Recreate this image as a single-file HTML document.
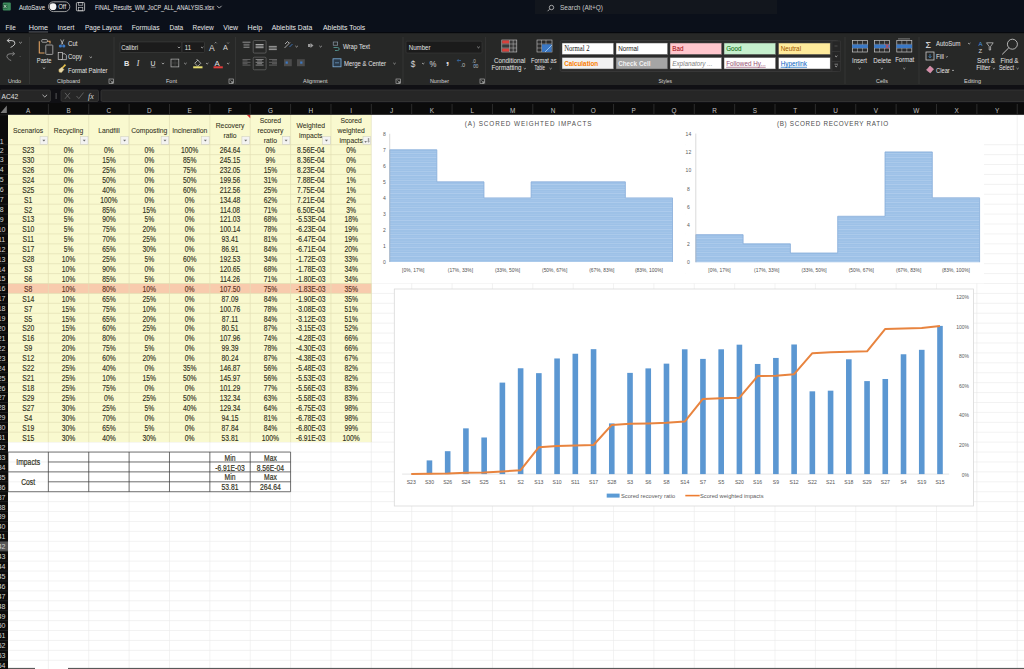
<!DOCTYPE html>
<html><head><meta charset="utf-8"><title>Excel</title>
<style>html,body{margin:0;padding:0;background:#fff;}body{width:1024px;height:669px;overflow:hidden;font-family:"Liberation Sans",sans-serif;}</style>
</head><body>
<svg width="1024" height="669" viewBox="0 0 1024 669" font-family='"Liberation Sans", sans-serif' style="display:block">
<rect x="0.00" y="0.00" width="1024.00" height="669.00" fill="#ffffff" />
<line x1="8.00" y1="114.80" x2="1024.00" y2="114.80" stroke="#eaeaea" stroke-width="0.6" />
<line x1="8.00" y1="144.70" x2="1024.00" y2="144.70" stroke="#eaeaea" stroke-width="0.6" />
<line x1="8.00" y1="154.61" x2="1024.00" y2="154.61" stroke="#eaeaea" stroke-width="0.6" />
<line x1="8.00" y1="164.53" x2="1024.00" y2="164.53" stroke="#eaeaea" stroke-width="0.6" />
<line x1="8.00" y1="174.44" x2="1024.00" y2="174.44" stroke="#eaeaea" stroke-width="0.6" />
<line x1="8.00" y1="184.36" x2="1024.00" y2="184.36" stroke="#eaeaea" stroke-width="0.6" />
<line x1="8.00" y1="194.27" x2="1024.00" y2="194.27" stroke="#eaeaea" stroke-width="0.6" />
<line x1="8.00" y1="204.19" x2="1024.00" y2="204.19" stroke="#eaeaea" stroke-width="0.6" />
<line x1="8.00" y1="214.10" x2="1024.00" y2="214.10" stroke="#eaeaea" stroke-width="0.6" />
<line x1="8.00" y1="224.02" x2="1024.00" y2="224.02" stroke="#eaeaea" stroke-width="0.6" />
<line x1="8.00" y1="233.93" x2="1024.00" y2="233.93" stroke="#eaeaea" stroke-width="0.6" />
<line x1="8.00" y1="243.85" x2="1024.00" y2="243.85" stroke="#eaeaea" stroke-width="0.6" />
<line x1="8.00" y1="253.76" x2="1024.00" y2="253.76" stroke="#eaeaea" stroke-width="0.6" />
<line x1="8.00" y1="263.68" x2="1024.00" y2="263.68" stroke="#eaeaea" stroke-width="0.6" />
<line x1="8.00" y1="273.59" x2="1024.00" y2="273.59" stroke="#eaeaea" stroke-width="0.6" />
<line x1="8.00" y1="283.51" x2="1024.00" y2="283.51" stroke="#eaeaea" stroke-width="0.6" />
<line x1="8.00" y1="293.42" x2="1024.00" y2="293.42" stroke="#eaeaea" stroke-width="0.6" />
<line x1="8.00" y1="303.34" x2="1024.00" y2="303.34" stroke="#eaeaea" stroke-width="0.6" />
<line x1="8.00" y1="313.25" x2="1024.00" y2="313.25" stroke="#eaeaea" stroke-width="0.6" />
<line x1="8.00" y1="323.17" x2="1024.00" y2="323.17" stroke="#eaeaea" stroke-width="0.6" />
<line x1="8.00" y1="333.08" x2="1024.00" y2="333.08" stroke="#eaeaea" stroke-width="0.6" />
<line x1="8.00" y1="343.00" x2="1024.00" y2="343.00" stroke="#eaeaea" stroke-width="0.6" />
<line x1="8.00" y1="352.91" x2="1024.00" y2="352.91" stroke="#eaeaea" stroke-width="0.6" />
<line x1="8.00" y1="362.83" x2="1024.00" y2="362.83" stroke="#eaeaea" stroke-width="0.6" />
<line x1="8.00" y1="372.75" x2="1024.00" y2="372.75" stroke="#eaeaea" stroke-width="0.6" />
<line x1="8.00" y1="382.66" x2="1024.00" y2="382.66" stroke="#eaeaea" stroke-width="0.6" />
<line x1="8.00" y1="392.57" x2="1024.00" y2="392.57" stroke="#eaeaea" stroke-width="0.6" />
<line x1="8.00" y1="402.49" x2="1024.00" y2="402.49" stroke="#eaeaea" stroke-width="0.6" />
<line x1="8.00" y1="412.40" x2="1024.00" y2="412.40" stroke="#eaeaea" stroke-width="0.6" />
<line x1="8.00" y1="422.32" x2="1024.00" y2="422.32" stroke="#eaeaea" stroke-width="0.6" />
<line x1="8.00" y1="432.23" x2="1024.00" y2="432.23" stroke="#eaeaea" stroke-width="0.6" />
<line x1="8.00" y1="442.15" x2="1024.00" y2="442.15" stroke="#eaeaea" stroke-width="0.6" />
<line x1="8.00" y1="452.06" x2="1024.00" y2="452.06" stroke="#eaeaea" stroke-width="0.6" />
<line x1="8.00" y1="461.98" x2="1024.00" y2="461.98" stroke="#eaeaea" stroke-width="0.6" />
<line x1="8.00" y1="471.89" x2="1024.00" y2="471.89" stroke="#eaeaea" stroke-width="0.6" />
<line x1="8.00" y1="481.81" x2="1024.00" y2="481.81" stroke="#eaeaea" stroke-width="0.6" />
<line x1="8.00" y1="491.72" x2="1024.00" y2="491.72" stroke="#eaeaea" stroke-width="0.6" />
<line x1="8.00" y1="501.64" x2="1024.00" y2="501.64" stroke="#eaeaea" stroke-width="0.6" />
<line x1="8.00" y1="511.55" x2="1024.00" y2="511.55" stroke="#eaeaea" stroke-width="0.6" />
<line x1="8.00" y1="521.47" x2="1024.00" y2="521.47" stroke="#eaeaea" stroke-width="0.6" />
<line x1="8.00" y1="531.38" x2="1024.00" y2="531.38" stroke="#eaeaea" stroke-width="0.6" />
<line x1="8.00" y1="541.30" x2="1024.00" y2="541.30" stroke="#eaeaea" stroke-width="0.6" />
<line x1="8.00" y1="551.21" x2="1024.00" y2="551.21" stroke="#eaeaea" stroke-width="0.6" />
<line x1="8.00" y1="561.13" x2="1024.00" y2="561.13" stroke="#eaeaea" stroke-width="0.6" />
<line x1="8.00" y1="571.04" x2="1024.00" y2="571.04" stroke="#eaeaea" stroke-width="0.6" />
<line x1="8.00" y1="580.96" x2="1024.00" y2="580.96" stroke="#eaeaea" stroke-width="0.6" />
<line x1="8.00" y1="590.88" x2="1024.00" y2="590.88" stroke="#eaeaea" stroke-width="0.6" />
<line x1="8.00" y1="600.79" x2="1024.00" y2="600.79" stroke="#eaeaea" stroke-width="0.6" />
<line x1="8.00" y1="610.70" x2="1024.00" y2="610.70" stroke="#eaeaea" stroke-width="0.6" />
<line x1="8.00" y1="620.62" x2="1024.00" y2="620.62" stroke="#eaeaea" stroke-width="0.6" />
<line x1="8.00" y1="630.53" x2="1024.00" y2="630.53" stroke="#eaeaea" stroke-width="0.6" />
<line x1="8.00" y1="640.45" x2="1024.00" y2="640.45" stroke="#eaeaea" stroke-width="0.6" />
<line x1="8.00" y1="650.37" x2="1024.00" y2="650.37" stroke="#eaeaea" stroke-width="0.6" />
<line x1="8.00" y1="660.28" x2="1024.00" y2="660.28" stroke="#eaeaea" stroke-width="0.6" />
<line x1="8.00" y1="670.19" x2="1024.00" y2="670.19" stroke="#eaeaea" stroke-width="0.6" />
<line x1="8.00" y1="680.11" x2="1024.00" y2="680.11" stroke="#eaeaea" stroke-width="0.6" />
<line x1="8.00" y1="690.02" x2="1024.00" y2="690.02" stroke="#eaeaea" stroke-width="0.6" />
<line x1="8.00" y1="699.94" x2="1024.00" y2="699.94" stroke="#eaeaea" stroke-width="0.6" />
<line x1="8.00" y1="709.86" x2="1024.00" y2="709.86" stroke="#eaeaea" stroke-width="0.6" />
<line x1="8.00" y1="114.80" x2="8.00" y2="669.00" stroke="#eaeaea" stroke-width="0.6" />
<line x1="48.37" y1="114.80" x2="48.37" y2="669.00" stroke="#eaeaea" stroke-width="0.6" />
<line x1="88.74" y1="114.80" x2="88.74" y2="669.00" stroke="#eaeaea" stroke-width="0.6" />
<line x1="129.11" y1="114.80" x2="129.11" y2="669.00" stroke="#eaeaea" stroke-width="0.6" />
<line x1="169.48" y1="114.80" x2="169.48" y2="669.00" stroke="#eaeaea" stroke-width="0.6" />
<line x1="209.85" y1="114.80" x2="209.85" y2="669.00" stroke="#eaeaea" stroke-width="0.6" />
<line x1="250.22" y1="114.80" x2="250.22" y2="669.00" stroke="#eaeaea" stroke-width="0.6" />
<line x1="290.59" y1="114.80" x2="290.59" y2="669.00" stroke="#eaeaea" stroke-width="0.6" />
<line x1="330.96" y1="114.80" x2="330.96" y2="669.00" stroke="#eaeaea" stroke-width="0.6" />
<line x1="371.33" y1="114.80" x2="371.33" y2="669.00" stroke="#eaeaea" stroke-width="0.6" />
<line x1="411.70" y1="114.80" x2="411.70" y2="669.00" stroke="#eaeaea" stroke-width="0.6" />
<line x1="452.07" y1="114.80" x2="452.07" y2="669.00" stroke="#eaeaea" stroke-width="0.6" />
<line x1="492.44" y1="114.80" x2="492.44" y2="669.00" stroke="#eaeaea" stroke-width="0.6" />
<line x1="532.81" y1="114.80" x2="532.81" y2="669.00" stroke="#eaeaea" stroke-width="0.6" />
<line x1="573.18" y1="114.80" x2="573.18" y2="669.00" stroke="#eaeaea" stroke-width="0.6" />
<line x1="613.55" y1="114.80" x2="613.55" y2="669.00" stroke="#eaeaea" stroke-width="0.6" />
<line x1="653.92" y1="114.80" x2="653.92" y2="669.00" stroke="#eaeaea" stroke-width="0.6" />
<line x1="694.29" y1="114.80" x2="694.29" y2="669.00" stroke="#eaeaea" stroke-width="0.6" />
<line x1="734.66" y1="114.80" x2="734.66" y2="669.00" stroke="#eaeaea" stroke-width="0.6" />
<line x1="775.03" y1="114.80" x2="775.03" y2="669.00" stroke="#eaeaea" stroke-width="0.6" />
<line x1="815.40" y1="114.80" x2="815.40" y2="669.00" stroke="#eaeaea" stroke-width="0.6" />
<line x1="855.77" y1="114.80" x2="855.77" y2="669.00" stroke="#eaeaea" stroke-width="0.6" />
<line x1="896.14" y1="114.80" x2="896.14" y2="669.00" stroke="#eaeaea" stroke-width="0.6" />
<line x1="936.51" y1="114.80" x2="936.51" y2="669.00" stroke="#eaeaea" stroke-width="0.6" />
<line x1="976.88" y1="114.80" x2="976.88" y2="669.00" stroke="#eaeaea" stroke-width="0.6" />
<line x1="1017.25" y1="114.80" x2="1017.25" y2="669.00" stroke="#eaeaea" stroke-width="0.6" />
<rect x="8.00" y="114.80" width="363.33" height="327.35" fill="#f9f9cf" />
<rect x="8.00" y="283.51" width="363.33" height="9.91" fill="#f8cbad" />
<line x1="8.00" y1="144.70" x2="371.33" y2="144.70" stroke="#e3e0b4" stroke-width="0.7" />
<line x1="8.00" y1="154.61" x2="371.33" y2="154.61" stroke="#e3e0b4" stroke-width="0.7" />
<line x1="8.00" y1="164.53" x2="371.33" y2="164.53" stroke="#e3e0b4" stroke-width="0.7" />
<line x1="8.00" y1="174.44" x2="371.33" y2="174.44" stroke="#e3e0b4" stroke-width="0.7" />
<line x1="8.00" y1="184.36" x2="371.33" y2="184.36" stroke="#e3e0b4" stroke-width="0.7" />
<line x1="8.00" y1="194.27" x2="371.33" y2="194.27" stroke="#e3e0b4" stroke-width="0.7" />
<line x1="8.00" y1="204.19" x2="371.33" y2="204.19" stroke="#e3e0b4" stroke-width="0.7" />
<line x1="8.00" y1="214.10" x2="371.33" y2="214.10" stroke="#e3e0b4" stroke-width="0.7" />
<line x1="8.00" y1="224.02" x2="371.33" y2="224.02" stroke="#e3e0b4" stroke-width="0.7" />
<line x1="8.00" y1="233.93" x2="371.33" y2="233.93" stroke="#e3e0b4" stroke-width="0.7" />
<line x1="8.00" y1="243.85" x2="371.33" y2="243.85" stroke="#e3e0b4" stroke-width="0.7" />
<line x1="8.00" y1="253.76" x2="371.33" y2="253.76" stroke="#e3e0b4" stroke-width="0.7" />
<line x1="8.00" y1="263.68" x2="371.33" y2="263.68" stroke="#e3e0b4" stroke-width="0.7" />
<line x1="8.00" y1="273.59" x2="371.33" y2="273.59" stroke="#e3e0b4" stroke-width="0.7" />
<line x1="8.00" y1="283.51" x2="371.33" y2="283.51" stroke="#e3e0b4" stroke-width="0.7" />
<line x1="8.00" y1="293.42" x2="371.33" y2="293.42" stroke="#e3e0b4" stroke-width="0.7" />
<line x1="8.00" y1="303.34" x2="371.33" y2="303.34" stroke="#e3e0b4" stroke-width="0.7" />
<line x1="8.00" y1="313.25" x2="371.33" y2="313.25" stroke="#e3e0b4" stroke-width="0.7" />
<line x1="8.00" y1="323.17" x2="371.33" y2="323.17" stroke="#e3e0b4" stroke-width="0.7" />
<line x1="8.00" y1="333.08" x2="371.33" y2="333.08" stroke="#e3e0b4" stroke-width="0.7" />
<line x1="8.00" y1="343.00" x2="371.33" y2="343.00" stroke="#e3e0b4" stroke-width="0.7" />
<line x1="8.00" y1="352.91" x2="371.33" y2="352.91" stroke="#e3e0b4" stroke-width="0.7" />
<line x1="8.00" y1="362.83" x2="371.33" y2="362.83" stroke="#e3e0b4" stroke-width="0.7" />
<line x1="8.00" y1="372.75" x2="371.33" y2="372.75" stroke="#e3e0b4" stroke-width="0.7" />
<line x1="8.00" y1="382.66" x2="371.33" y2="382.66" stroke="#e3e0b4" stroke-width="0.7" />
<line x1="8.00" y1="392.57" x2="371.33" y2="392.57" stroke="#e3e0b4" stroke-width="0.7" />
<line x1="8.00" y1="402.49" x2="371.33" y2="402.49" stroke="#e3e0b4" stroke-width="0.7" />
<line x1="8.00" y1="412.40" x2="371.33" y2="412.40" stroke="#e3e0b4" stroke-width="0.7" />
<line x1="8.00" y1="422.32" x2="371.33" y2="422.32" stroke="#e3e0b4" stroke-width="0.7" />
<line x1="8.00" y1="432.23" x2="371.33" y2="432.23" stroke="#e3e0b4" stroke-width="0.7" />
<line x1="48.37" y1="114.80" x2="48.37" y2="442.15" stroke="#e3e0b4" stroke-width="0.7" />
<line x1="88.74" y1="114.80" x2="88.74" y2="442.15" stroke="#e3e0b4" stroke-width="0.7" />
<line x1="129.11" y1="114.80" x2="129.11" y2="442.15" stroke="#e3e0b4" stroke-width="0.7" />
<line x1="169.48" y1="114.80" x2="169.48" y2="442.15" stroke="#e3e0b4" stroke-width="0.7" />
<line x1="209.85" y1="114.80" x2="209.85" y2="442.15" stroke="#e3e0b4" stroke-width="0.7" />
<line x1="250.22" y1="114.80" x2="250.22" y2="442.15" stroke="#e3e0b4" stroke-width="0.7" />
<line x1="290.59" y1="114.80" x2="290.59" y2="442.15" stroke="#e3e0b4" stroke-width="0.7" />
<line x1="330.96" y1="114.80" x2="330.96" y2="442.15" stroke="#e3e0b4" stroke-width="0.7" />
<line x1="371.33" y1="114.80" x2="371.33" y2="442.15" stroke="#e3e0b4" stroke-width="0.7" />
<text transform="translate(28.18,132.60) scale(0.85,1)" font-size="8.0" fill="#33331d" text-anchor="middle" stroke="#33331d" stroke-width="0.08">Scenarios</text>
<rect x="40.07" y="136.70" width="7.60" height="7.60" fill="#f3f3f1" stroke="#c9c9c2" stroke-width="0.5" />
<path d="M42.37 139.70 L45.37 139.70 L43.87 141.50Z" stroke="none" fill="#6a6a6a" stroke-width="1" />
<text transform="translate(68.55,132.60) scale(0.85,1)" font-size="8.0" fill="#33331d" text-anchor="middle" stroke="#33331d" stroke-width="0.08">Recycling</text>
<rect x="80.44" y="136.70" width="7.60" height="7.60" fill="#f3f3f1" stroke="#c9c9c2" stroke-width="0.5" />
<path d="M82.74 139.70 L85.74 139.70 L84.24 141.50Z" stroke="none" fill="#6a6a6a" stroke-width="1" />
<text transform="translate(108.92,132.60) scale(0.85,1)" font-size="8.0" fill="#33331d" text-anchor="middle" stroke="#33331d" stroke-width="0.08">Landfill</text>
<rect x="120.81" y="136.70" width="7.60" height="7.60" fill="#f3f3f1" stroke="#c9c9c2" stroke-width="0.5" />
<path d="M123.11 139.70 L126.11 139.70 L124.61 141.50Z" stroke="none" fill="#6a6a6a" stroke-width="1" />
<text transform="translate(149.29,132.60) scale(0.85,1)" font-size="8.0" fill="#33331d" text-anchor="middle" stroke="#33331d" stroke-width="0.08">Composting</text>
<rect x="161.18" y="136.70" width="7.60" height="7.60" fill="#f3f3f1" stroke="#c9c9c2" stroke-width="0.5" />
<path d="M163.48 139.70 L166.48 139.70 L164.98 141.50Z" stroke="none" fill="#6a6a6a" stroke-width="1" />
<text transform="translate(189.66,132.60) scale(0.85,1)" font-size="8.0" fill="#33331d" text-anchor="middle" stroke="#33331d" stroke-width="0.08">Incineration</text>
<rect x="201.55" y="136.70" width="7.60" height="7.60" fill="#f3f3f1" stroke="#c9c9c2" stroke-width="0.5" />
<path d="M203.85 139.70 L206.85 139.70 L205.35 141.50Z" stroke="none" fill="#6a6a6a" stroke-width="1" />
<text transform="translate(230.03,127.65) scale(0.85,1)" font-size="8.0" fill="#33331d" text-anchor="middle" stroke="#33331d" stroke-width="0.08">Recovery</text>
<text transform="translate(230.03,137.55) scale(0.85,1)" font-size="8.0" fill="#33331d" text-anchor="middle" stroke="#33331d" stroke-width="0.08">ratio</text>
<rect x="241.92" y="136.70" width="7.60" height="7.60" fill="#f3f3f1" stroke="#c9c9c2" stroke-width="0.5" />
<path d="M244.22 139.70 L247.22 139.70 L245.72 141.50Z" stroke="none" fill="#6a6a6a" stroke-width="1" />
<text transform="translate(270.40,122.70) scale(0.85,1)" font-size="8.0" fill="#33331d" text-anchor="middle" stroke="#33331d" stroke-width="0.08">Scored</text>
<text transform="translate(270.40,132.60) scale(0.85,1)" font-size="8.0" fill="#33331d" text-anchor="middle" stroke="#33331d" stroke-width="0.08">recovery</text>
<text transform="translate(270.40,142.50) scale(0.85,1)" font-size="8.0" fill="#33331d" text-anchor="middle" stroke="#33331d" stroke-width="0.08">ratio</text>
<rect x="282.29" y="136.70" width="7.60" height="7.60" fill="#f3f3f1" stroke="#c9c9c2" stroke-width="0.5" />
<path d="M284.59 139.70 L287.59 139.70 L286.09 141.50Z" stroke="none" fill="#6a6a6a" stroke-width="1" />
<text transform="translate(310.77,127.65) scale(0.85,1)" font-size="8.0" fill="#33331d" text-anchor="middle" stroke="#33331d" stroke-width="0.08">Weighted</text>
<text transform="translate(310.77,137.55) scale(0.85,1)" font-size="8.0" fill="#33331d" text-anchor="middle" stroke="#33331d" stroke-width="0.08">impacts</text>
<rect x="322.66" y="136.70" width="7.60" height="7.60" fill="#f3f3f1" stroke="#c9c9c2" stroke-width="0.5" />
<path d="M324.96 139.70 L327.96 139.70 L326.46 141.50Z" stroke="none" fill="#6a6a6a" stroke-width="1" />
<text transform="translate(351.14,122.70) scale(0.85,1)" font-size="8.0" fill="#33331d" text-anchor="middle" stroke="#33331d" stroke-width="0.08">Scored</text>
<text transform="translate(351.14,132.60) scale(0.85,1)" font-size="8.0" fill="#33331d" text-anchor="middle" stroke="#33331d" stroke-width="0.08">weighted</text>
<text transform="translate(351.14,142.50) scale(0.85,1)" font-size="8.0" fill="#33331d" text-anchor="middle" stroke="#33331d" stroke-width="0.08">impacts</text>
<rect x="363.03" y="136.70" width="7.60" height="7.60" fill="#f3f3f1" stroke="#c9c9c2" stroke-width="0.5" />
<path d="M364.33 141.30 L366.93 141.30 L365.63 142.70Z" stroke="none" fill="#555" stroke-width="1" />
<rect x="367.83" y="138.10" width="1.40" height="3.60" fill="#9a9a9a" />
<path d="M367.23 141.30 L369.83 141.30 L368.53 142.70Z" stroke="none" fill="#9a9a9a" stroke-width="1" />
<text transform="translate(28.18,153.01) scale(0.815,1)" font-size="8.3" fill="#33331d" text-anchor="middle" stroke="#33331d" stroke-width="0.15">S23</text>
<text transform="translate(68.55,153.01) scale(0.815,1)" font-size="8.3" fill="#33331d" text-anchor="middle" stroke="#33331d" stroke-width="0.15">0%</text>
<text transform="translate(108.92,153.01) scale(0.815,1)" font-size="8.3" fill="#33331d" text-anchor="middle" stroke="#33331d" stroke-width="0.15">0%</text>
<text transform="translate(149.29,153.01) scale(0.815,1)" font-size="8.3" fill="#33331d" text-anchor="middle" stroke="#33331d" stroke-width="0.15">0%</text>
<text transform="translate(189.66,153.01) scale(0.815,1)" font-size="8.3" fill="#33331d" text-anchor="middle" stroke="#33331d" stroke-width="0.15">100%</text>
<text transform="translate(230.03,153.01) scale(0.815,1)" font-size="8.3" fill="#33331d" text-anchor="middle" stroke="#33331d" stroke-width="0.15">264.64</text>
<text transform="translate(270.40,153.01) scale(0.815,1)" font-size="8.3" fill="#33331d" text-anchor="middle" stroke="#33331d" stroke-width="0.15">0%</text>
<text transform="translate(310.77,153.01) scale(0.815,1)" font-size="8.3" fill="#33331d" text-anchor="middle" stroke="#33331d" stroke-width="0.15">8.56E-04</text>
<text transform="translate(351.14,153.01) scale(0.815,1)" font-size="8.3" fill="#33331d" text-anchor="middle" stroke="#33331d" stroke-width="0.15">0%</text>
<text transform="translate(28.18,162.92) scale(0.815,1)" font-size="8.3" fill="#33331d" text-anchor="middle" stroke="#33331d" stroke-width="0.15">S30</text>
<text transform="translate(68.55,162.92) scale(0.815,1)" font-size="8.3" fill="#33331d" text-anchor="middle" stroke="#33331d" stroke-width="0.15">0%</text>
<text transform="translate(108.92,162.92) scale(0.815,1)" font-size="8.3" fill="#33331d" text-anchor="middle" stroke="#33331d" stroke-width="0.15">15%</text>
<text transform="translate(149.29,162.92) scale(0.815,1)" font-size="8.3" fill="#33331d" text-anchor="middle" stroke="#33331d" stroke-width="0.15">0%</text>
<text transform="translate(189.66,162.92) scale(0.815,1)" font-size="8.3" fill="#33331d" text-anchor="middle" stroke="#33331d" stroke-width="0.15">85%</text>
<text transform="translate(230.03,162.92) scale(0.815,1)" font-size="8.3" fill="#33331d" text-anchor="middle" stroke="#33331d" stroke-width="0.15">245.15</text>
<text transform="translate(270.40,162.92) scale(0.815,1)" font-size="8.3" fill="#33331d" text-anchor="middle" stroke="#33331d" stroke-width="0.15">9%</text>
<text transform="translate(310.77,162.92) scale(0.815,1)" font-size="8.3" fill="#33331d" text-anchor="middle" stroke="#33331d" stroke-width="0.15">8.36E-04</text>
<text transform="translate(351.14,162.92) scale(0.815,1)" font-size="8.3" fill="#33331d" text-anchor="middle" stroke="#33331d" stroke-width="0.15">0%</text>
<text transform="translate(28.18,172.84) scale(0.815,1)" font-size="8.3" fill="#33331d" text-anchor="middle" stroke="#33331d" stroke-width="0.15">S26</text>
<text transform="translate(68.55,172.84) scale(0.815,1)" font-size="8.3" fill="#33331d" text-anchor="middle" stroke="#33331d" stroke-width="0.15">0%</text>
<text transform="translate(108.92,172.84) scale(0.815,1)" font-size="8.3" fill="#33331d" text-anchor="middle" stroke="#33331d" stroke-width="0.15">25%</text>
<text transform="translate(149.29,172.84) scale(0.815,1)" font-size="8.3" fill="#33331d" text-anchor="middle" stroke="#33331d" stroke-width="0.15">0%</text>
<text transform="translate(189.66,172.84) scale(0.815,1)" font-size="8.3" fill="#33331d" text-anchor="middle" stroke="#33331d" stroke-width="0.15">75%</text>
<text transform="translate(230.03,172.84) scale(0.815,1)" font-size="8.3" fill="#33331d" text-anchor="middle" stroke="#33331d" stroke-width="0.15">232.05</text>
<text transform="translate(270.40,172.84) scale(0.815,1)" font-size="8.3" fill="#33331d" text-anchor="middle" stroke="#33331d" stroke-width="0.15">15%</text>
<text transform="translate(310.77,172.84) scale(0.815,1)" font-size="8.3" fill="#33331d" text-anchor="middle" stroke="#33331d" stroke-width="0.15">8.23E-04</text>
<text transform="translate(351.14,172.84) scale(0.815,1)" font-size="8.3" fill="#33331d" text-anchor="middle" stroke="#33331d" stroke-width="0.15">0%</text>
<text transform="translate(28.18,182.75) scale(0.815,1)" font-size="8.3" fill="#33331d" text-anchor="middle" stroke="#33331d" stroke-width="0.15">S24</text>
<text transform="translate(68.55,182.75) scale(0.815,1)" font-size="8.3" fill="#33331d" text-anchor="middle" stroke="#33331d" stroke-width="0.15">0%</text>
<text transform="translate(108.92,182.75) scale(0.815,1)" font-size="8.3" fill="#33331d" text-anchor="middle" stroke="#33331d" stroke-width="0.15">50%</text>
<text transform="translate(149.29,182.75) scale(0.815,1)" font-size="8.3" fill="#33331d" text-anchor="middle" stroke="#33331d" stroke-width="0.15">0%</text>
<text transform="translate(189.66,182.75) scale(0.815,1)" font-size="8.3" fill="#33331d" text-anchor="middle" stroke="#33331d" stroke-width="0.15">50%</text>
<text transform="translate(230.03,182.75) scale(0.815,1)" font-size="8.3" fill="#33331d" text-anchor="middle" stroke="#33331d" stroke-width="0.15">199.56</text>
<text transform="translate(270.40,182.75) scale(0.815,1)" font-size="8.3" fill="#33331d" text-anchor="middle" stroke="#33331d" stroke-width="0.15">31%</text>
<text transform="translate(310.77,182.75) scale(0.815,1)" font-size="8.3" fill="#33331d" text-anchor="middle" stroke="#33331d" stroke-width="0.15">7.88E-04</text>
<text transform="translate(351.14,182.75) scale(0.815,1)" font-size="8.3" fill="#33331d" text-anchor="middle" stroke="#33331d" stroke-width="0.15">1%</text>
<text transform="translate(28.18,192.67) scale(0.815,1)" font-size="8.3" fill="#33331d" text-anchor="middle" stroke="#33331d" stroke-width="0.15">S25</text>
<text transform="translate(68.55,192.67) scale(0.815,1)" font-size="8.3" fill="#33331d" text-anchor="middle" stroke="#33331d" stroke-width="0.15">0%</text>
<text transform="translate(108.92,192.67) scale(0.815,1)" font-size="8.3" fill="#33331d" text-anchor="middle" stroke="#33331d" stroke-width="0.15">40%</text>
<text transform="translate(149.29,192.67) scale(0.815,1)" font-size="8.3" fill="#33331d" text-anchor="middle" stroke="#33331d" stroke-width="0.15">0%</text>
<text transform="translate(189.66,192.67) scale(0.815,1)" font-size="8.3" fill="#33331d" text-anchor="middle" stroke="#33331d" stroke-width="0.15">60%</text>
<text transform="translate(230.03,192.67) scale(0.815,1)" font-size="8.3" fill="#33331d" text-anchor="middle" stroke="#33331d" stroke-width="0.15">212.56</text>
<text transform="translate(270.40,192.67) scale(0.815,1)" font-size="8.3" fill="#33331d" text-anchor="middle" stroke="#33331d" stroke-width="0.15">25%</text>
<text transform="translate(310.77,192.67) scale(0.815,1)" font-size="8.3" fill="#33331d" text-anchor="middle" stroke="#33331d" stroke-width="0.15">7.75E-04</text>
<text transform="translate(351.14,192.67) scale(0.815,1)" font-size="8.3" fill="#33331d" text-anchor="middle" stroke="#33331d" stroke-width="0.15">1%</text>
<text transform="translate(28.18,202.58) scale(0.815,1)" font-size="8.3" fill="#33331d" text-anchor="middle" stroke="#33331d" stroke-width="0.15">S1</text>
<text transform="translate(68.55,202.58) scale(0.815,1)" font-size="8.3" fill="#33331d" text-anchor="middle" stroke="#33331d" stroke-width="0.15">0%</text>
<text transform="translate(108.92,202.58) scale(0.815,1)" font-size="8.3" fill="#33331d" text-anchor="middle" stroke="#33331d" stroke-width="0.15">100%</text>
<text transform="translate(149.29,202.58) scale(0.815,1)" font-size="8.3" fill="#33331d" text-anchor="middle" stroke="#33331d" stroke-width="0.15">0%</text>
<text transform="translate(189.66,202.58) scale(0.815,1)" font-size="8.3" fill="#33331d" text-anchor="middle" stroke="#33331d" stroke-width="0.15">0%</text>
<text transform="translate(230.03,202.58) scale(0.815,1)" font-size="8.3" fill="#33331d" text-anchor="middle" stroke="#33331d" stroke-width="0.15">134.48</text>
<text transform="translate(270.40,202.58) scale(0.815,1)" font-size="8.3" fill="#33331d" text-anchor="middle" stroke="#33331d" stroke-width="0.15">62%</text>
<text transform="translate(310.77,202.58) scale(0.815,1)" font-size="8.3" fill="#33331d" text-anchor="middle" stroke="#33331d" stroke-width="0.15">7.21E-04</text>
<text transform="translate(351.14,202.58) scale(0.815,1)" font-size="8.3" fill="#33331d" text-anchor="middle" stroke="#33331d" stroke-width="0.15">2%</text>
<text transform="translate(28.18,212.50) scale(0.815,1)" font-size="8.3" fill="#33331d" text-anchor="middle" stroke="#33331d" stroke-width="0.15">S2</text>
<text transform="translate(68.55,212.50) scale(0.815,1)" font-size="8.3" fill="#33331d" text-anchor="middle" stroke="#33331d" stroke-width="0.15">0%</text>
<text transform="translate(108.92,212.50) scale(0.815,1)" font-size="8.3" fill="#33331d" text-anchor="middle" stroke="#33331d" stroke-width="0.15">85%</text>
<text transform="translate(149.29,212.50) scale(0.815,1)" font-size="8.3" fill="#33331d" text-anchor="middle" stroke="#33331d" stroke-width="0.15">15%</text>
<text transform="translate(189.66,212.50) scale(0.815,1)" font-size="8.3" fill="#33331d" text-anchor="middle" stroke="#33331d" stroke-width="0.15">0%</text>
<text transform="translate(230.03,212.50) scale(0.815,1)" font-size="8.3" fill="#33331d" text-anchor="middle" stroke="#33331d" stroke-width="0.15">114.08</text>
<text transform="translate(270.40,212.50) scale(0.815,1)" font-size="8.3" fill="#33331d" text-anchor="middle" stroke="#33331d" stroke-width="0.15">71%</text>
<text transform="translate(310.77,212.50) scale(0.815,1)" font-size="8.3" fill="#33331d" text-anchor="middle" stroke="#33331d" stroke-width="0.15">6.50E-04</text>
<text transform="translate(351.14,212.50) scale(0.815,1)" font-size="8.3" fill="#33331d" text-anchor="middle" stroke="#33331d" stroke-width="0.15">3%</text>
<text transform="translate(28.18,222.41) scale(0.815,1)" font-size="8.3" fill="#33331d" text-anchor="middle" stroke="#33331d" stroke-width="0.15">S13</text>
<text transform="translate(68.55,222.41) scale(0.815,1)" font-size="8.3" fill="#33331d" text-anchor="middle" stroke="#33331d" stroke-width="0.15">5%</text>
<text transform="translate(108.92,222.41) scale(0.815,1)" font-size="8.3" fill="#33331d" text-anchor="middle" stroke="#33331d" stroke-width="0.15">90%</text>
<text transform="translate(149.29,222.41) scale(0.815,1)" font-size="8.3" fill="#33331d" text-anchor="middle" stroke="#33331d" stroke-width="0.15">5%</text>
<text transform="translate(189.66,222.41) scale(0.815,1)" font-size="8.3" fill="#33331d" text-anchor="middle" stroke="#33331d" stroke-width="0.15">0%</text>
<text transform="translate(230.03,222.41) scale(0.815,1)" font-size="8.3" fill="#33331d" text-anchor="middle" stroke="#33331d" stroke-width="0.15">121.03</text>
<text transform="translate(270.40,222.41) scale(0.815,1)" font-size="8.3" fill="#33331d" text-anchor="middle" stroke="#33331d" stroke-width="0.15">68%</text>
<text transform="translate(310.77,222.41) scale(0.815,1)" font-size="8.3" fill="#33331d" text-anchor="middle" stroke="#33331d" stroke-width="0.15">-5.53E-04</text>
<text transform="translate(351.14,222.41) scale(0.815,1)" font-size="8.3" fill="#33331d" text-anchor="middle" stroke="#33331d" stroke-width="0.15">18%</text>
<text transform="translate(28.18,232.33) scale(0.815,1)" font-size="8.3" fill="#33331d" text-anchor="middle" stroke="#33331d" stroke-width="0.15">S10</text>
<text transform="translate(68.55,232.33) scale(0.815,1)" font-size="8.3" fill="#33331d" text-anchor="middle" stroke="#33331d" stroke-width="0.15">5%</text>
<text transform="translate(108.92,232.33) scale(0.815,1)" font-size="8.3" fill="#33331d" text-anchor="middle" stroke="#33331d" stroke-width="0.15">75%</text>
<text transform="translate(149.29,232.33) scale(0.815,1)" font-size="8.3" fill="#33331d" text-anchor="middle" stroke="#33331d" stroke-width="0.15">20%</text>
<text transform="translate(189.66,232.33) scale(0.815,1)" font-size="8.3" fill="#33331d" text-anchor="middle" stroke="#33331d" stroke-width="0.15">0%</text>
<text transform="translate(230.03,232.33) scale(0.815,1)" font-size="8.3" fill="#33331d" text-anchor="middle" stroke="#33331d" stroke-width="0.15">100.14</text>
<text transform="translate(270.40,232.33) scale(0.815,1)" font-size="8.3" fill="#33331d" text-anchor="middle" stroke="#33331d" stroke-width="0.15">78%</text>
<text transform="translate(310.77,232.33) scale(0.815,1)" font-size="8.3" fill="#33331d" text-anchor="middle" stroke="#33331d" stroke-width="0.15">-6.23E-04</text>
<text transform="translate(351.14,232.33) scale(0.815,1)" font-size="8.3" fill="#33331d" text-anchor="middle" stroke="#33331d" stroke-width="0.15">19%</text>
<text transform="translate(28.18,242.24) scale(0.815,1)" font-size="8.3" fill="#33331d" text-anchor="middle" stroke="#33331d" stroke-width="0.15">S11</text>
<text transform="translate(68.55,242.24) scale(0.815,1)" font-size="8.3" fill="#33331d" text-anchor="middle" stroke="#33331d" stroke-width="0.15">5%</text>
<text transform="translate(108.92,242.24) scale(0.815,1)" font-size="8.3" fill="#33331d" text-anchor="middle" stroke="#33331d" stroke-width="0.15">70%</text>
<text transform="translate(149.29,242.24) scale(0.815,1)" font-size="8.3" fill="#33331d" text-anchor="middle" stroke="#33331d" stroke-width="0.15">25%</text>
<text transform="translate(189.66,242.24) scale(0.815,1)" font-size="8.3" fill="#33331d" text-anchor="middle" stroke="#33331d" stroke-width="0.15">0%</text>
<text transform="translate(230.03,242.24) scale(0.815,1)" font-size="8.3" fill="#33331d" text-anchor="middle" stroke="#33331d" stroke-width="0.15">93.41</text>
<text transform="translate(270.40,242.24) scale(0.815,1)" font-size="8.3" fill="#33331d" text-anchor="middle" stroke="#33331d" stroke-width="0.15">81%</text>
<text transform="translate(310.77,242.24) scale(0.815,1)" font-size="8.3" fill="#33331d" text-anchor="middle" stroke="#33331d" stroke-width="0.15">-6.47E-04</text>
<text transform="translate(351.14,242.24) scale(0.815,1)" font-size="8.3" fill="#33331d" text-anchor="middle" stroke="#33331d" stroke-width="0.15">19%</text>
<text transform="translate(28.18,252.16) scale(0.815,1)" font-size="8.3" fill="#33331d" text-anchor="middle" stroke="#33331d" stroke-width="0.15">S17</text>
<text transform="translate(68.55,252.16) scale(0.815,1)" font-size="8.3" fill="#33331d" text-anchor="middle" stroke="#33331d" stroke-width="0.15">5%</text>
<text transform="translate(108.92,252.16) scale(0.815,1)" font-size="8.3" fill="#33331d" text-anchor="middle" stroke="#33331d" stroke-width="0.15">65%</text>
<text transform="translate(149.29,252.16) scale(0.815,1)" font-size="8.3" fill="#33331d" text-anchor="middle" stroke="#33331d" stroke-width="0.15">30%</text>
<text transform="translate(189.66,252.16) scale(0.815,1)" font-size="8.3" fill="#33331d" text-anchor="middle" stroke="#33331d" stroke-width="0.15">0%</text>
<text transform="translate(230.03,252.16) scale(0.815,1)" font-size="8.3" fill="#33331d" text-anchor="middle" stroke="#33331d" stroke-width="0.15">86.91</text>
<text transform="translate(270.40,252.16) scale(0.815,1)" font-size="8.3" fill="#33331d" text-anchor="middle" stroke="#33331d" stroke-width="0.15">84%</text>
<text transform="translate(310.77,252.16) scale(0.815,1)" font-size="8.3" fill="#33331d" text-anchor="middle" stroke="#33331d" stroke-width="0.15">-6.71E-04</text>
<text transform="translate(351.14,252.16) scale(0.815,1)" font-size="8.3" fill="#33331d" text-anchor="middle" stroke="#33331d" stroke-width="0.15">20%</text>
<text transform="translate(28.18,262.07) scale(0.815,1)" font-size="8.3" fill="#33331d" text-anchor="middle" stroke="#33331d" stroke-width="0.15">S28</text>
<text transform="translate(68.55,262.07) scale(0.815,1)" font-size="8.3" fill="#33331d" text-anchor="middle" stroke="#33331d" stroke-width="0.15">10%</text>
<text transform="translate(108.92,262.07) scale(0.815,1)" font-size="8.3" fill="#33331d" text-anchor="middle" stroke="#33331d" stroke-width="0.15">25%</text>
<text transform="translate(149.29,262.07) scale(0.815,1)" font-size="8.3" fill="#33331d" text-anchor="middle" stroke="#33331d" stroke-width="0.15">5%</text>
<text transform="translate(189.66,262.07) scale(0.815,1)" font-size="8.3" fill="#33331d" text-anchor="middle" stroke="#33331d" stroke-width="0.15">60%</text>
<text transform="translate(230.03,262.07) scale(0.815,1)" font-size="8.3" fill="#33331d" text-anchor="middle" stroke="#33331d" stroke-width="0.15">192.53</text>
<text transform="translate(270.40,262.07) scale(0.815,1)" font-size="8.3" fill="#33331d" text-anchor="middle" stroke="#33331d" stroke-width="0.15">34%</text>
<text transform="translate(310.77,262.07) scale(0.815,1)" font-size="8.3" fill="#33331d" text-anchor="middle" stroke="#33331d" stroke-width="0.15">-1.72E-03</text>
<text transform="translate(351.14,262.07) scale(0.815,1)" font-size="8.3" fill="#33331d" text-anchor="middle" stroke="#33331d" stroke-width="0.15">33%</text>
<text transform="translate(28.18,271.99) scale(0.815,1)" font-size="8.3" fill="#33331d" text-anchor="middle" stroke="#33331d" stroke-width="0.15">S3</text>
<text transform="translate(68.55,271.99) scale(0.815,1)" font-size="8.3" fill="#33331d" text-anchor="middle" stroke="#33331d" stroke-width="0.15">10%</text>
<text transform="translate(108.92,271.99) scale(0.815,1)" font-size="8.3" fill="#33331d" text-anchor="middle" stroke="#33331d" stroke-width="0.15">90%</text>
<text transform="translate(149.29,271.99) scale(0.815,1)" font-size="8.3" fill="#33331d" text-anchor="middle" stroke="#33331d" stroke-width="0.15">0%</text>
<text transform="translate(189.66,271.99) scale(0.815,1)" font-size="8.3" fill="#33331d" text-anchor="middle" stroke="#33331d" stroke-width="0.15">0%</text>
<text transform="translate(230.03,271.99) scale(0.815,1)" font-size="8.3" fill="#33331d" text-anchor="middle" stroke="#33331d" stroke-width="0.15">120.65</text>
<text transform="translate(270.40,271.99) scale(0.815,1)" font-size="8.3" fill="#33331d" text-anchor="middle" stroke="#33331d" stroke-width="0.15">68%</text>
<text transform="translate(310.77,271.99) scale(0.815,1)" font-size="8.3" fill="#33331d" text-anchor="middle" stroke="#33331d" stroke-width="0.15">-1.78E-03</text>
<text transform="translate(351.14,271.99) scale(0.815,1)" font-size="8.3" fill="#33331d" text-anchor="middle" stroke="#33331d" stroke-width="0.15">34%</text>
<text transform="translate(28.18,281.90) scale(0.815,1)" font-size="8.3" fill="#33331d" text-anchor="middle" stroke="#33331d" stroke-width="0.15">S6</text>
<text transform="translate(68.55,281.90) scale(0.815,1)" font-size="8.3" fill="#33331d" text-anchor="middle" stroke="#33331d" stroke-width="0.15">10%</text>
<text transform="translate(108.92,281.90) scale(0.815,1)" font-size="8.3" fill="#33331d" text-anchor="middle" stroke="#33331d" stroke-width="0.15">85%</text>
<text transform="translate(149.29,281.90) scale(0.815,1)" font-size="8.3" fill="#33331d" text-anchor="middle" stroke="#33331d" stroke-width="0.15">5%</text>
<text transform="translate(189.66,281.90) scale(0.815,1)" font-size="8.3" fill="#33331d" text-anchor="middle" stroke="#33331d" stroke-width="0.15">0%</text>
<text transform="translate(230.03,281.90) scale(0.815,1)" font-size="8.3" fill="#33331d" text-anchor="middle" stroke="#33331d" stroke-width="0.15">114.26</text>
<text transform="translate(270.40,281.90) scale(0.815,1)" font-size="8.3" fill="#33331d" text-anchor="middle" stroke="#33331d" stroke-width="0.15">71%</text>
<text transform="translate(310.77,281.90) scale(0.815,1)" font-size="8.3" fill="#33331d" text-anchor="middle" stroke="#33331d" stroke-width="0.15">-1.80E-03</text>
<text transform="translate(351.14,281.90) scale(0.815,1)" font-size="8.3" fill="#33331d" text-anchor="middle" stroke="#33331d" stroke-width="0.15">34%</text>
<text transform="translate(28.18,291.82) scale(0.815,1)" font-size="8.3" fill="#5e3422" text-anchor="middle" stroke="#5e3422" stroke-width="0.15">S8</text>
<text transform="translate(68.55,291.82) scale(0.815,1)" font-size="8.3" fill="#5e3422" text-anchor="middle" stroke="#5e3422" stroke-width="0.15">10%</text>
<text transform="translate(108.92,291.82) scale(0.815,1)" font-size="8.3" fill="#5e3422" text-anchor="middle" stroke="#5e3422" stroke-width="0.15">80%</text>
<text transform="translate(149.29,291.82) scale(0.815,1)" font-size="8.3" fill="#5e3422" text-anchor="middle" stroke="#5e3422" stroke-width="0.15">10%</text>
<text transform="translate(189.66,291.82) scale(0.815,1)" font-size="8.3" fill="#5e3422" text-anchor="middle" stroke="#5e3422" stroke-width="0.15">0%</text>
<text transform="translate(230.03,291.82) scale(0.815,1)" font-size="8.3" fill="#5e3422" text-anchor="middle" stroke="#5e3422" stroke-width="0.15">107.50</text>
<text transform="translate(270.40,291.82) scale(0.815,1)" font-size="8.3" fill="#5e3422" text-anchor="middle" stroke="#5e3422" stroke-width="0.15">75%</text>
<text transform="translate(310.77,291.82) scale(0.815,1)" font-size="8.3" fill="#5e3422" text-anchor="middle" stroke="#5e3422" stroke-width="0.15">-1.83E-03</text>
<text transform="translate(351.14,291.82) scale(0.815,1)" font-size="8.3" fill="#5e3422" text-anchor="middle" stroke="#5e3422" stroke-width="0.15">35%</text>
<text transform="translate(28.18,301.73) scale(0.815,1)" font-size="8.3" fill="#33331d" text-anchor="middle" stroke="#33331d" stroke-width="0.15">S14</text>
<text transform="translate(68.55,301.73) scale(0.815,1)" font-size="8.3" fill="#33331d" text-anchor="middle" stroke="#33331d" stroke-width="0.15">10%</text>
<text transform="translate(108.92,301.73) scale(0.815,1)" font-size="8.3" fill="#33331d" text-anchor="middle" stroke="#33331d" stroke-width="0.15">65%</text>
<text transform="translate(149.29,301.73) scale(0.815,1)" font-size="8.3" fill="#33331d" text-anchor="middle" stroke="#33331d" stroke-width="0.15">25%</text>
<text transform="translate(189.66,301.73) scale(0.815,1)" font-size="8.3" fill="#33331d" text-anchor="middle" stroke="#33331d" stroke-width="0.15">0%</text>
<text transform="translate(230.03,301.73) scale(0.815,1)" font-size="8.3" fill="#33331d" text-anchor="middle" stroke="#33331d" stroke-width="0.15">87.09</text>
<text transform="translate(270.40,301.73) scale(0.815,1)" font-size="8.3" fill="#33331d" text-anchor="middle" stroke="#33331d" stroke-width="0.15">84%</text>
<text transform="translate(310.77,301.73) scale(0.815,1)" font-size="8.3" fill="#33331d" text-anchor="middle" stroke="#33331d" stroke-width="0.15">-1.90E-03</text>
<text transform="translate(351.14,301.73) scale(0.815,1)" font-size="8.3" fill="#33331d" text-anchor="middle" stroke="#33331d" stroke-width="0.15">35%</text>
<text transform="translate(28.18,311.65) scale(0.815,1)" font-size="8.3" fill="#33331d" text-anchor="middle" stroke="#33331d" stroke-width="0.15">S7</text>
<text transform="translate(68.55,311.65) scale(0.815,1)" font-size="8.3" fill="#33331d" text-anchor="middle" stroke="#33331d" stroke-width="0.15">15%</text>
<text transform="translate(108.92,311.65) scale(0.815,1)" font-size="8.3" fill="#33331d" text-anchor="middle" stroke="#33331d" stroke-width="0.15">75%</text>
<text transform="translate(149.29,311.65) scale(0.815,1)" font-size="8.3" fill="#33331d" text-anchor="middle" stroke="#33331d" stroke-width="0.15">10%</text>
<text transform="translate(189.66,311.65) scale(0.815,1)" font-size="8.3" fill="#33331d" text-anchor="middle" stroke="#33331d" stroke-width="0.15">0%</text>
<text transform="translate(230.03,311.65) scale(0.815,1)" font-size="8.3" fill="#33331d" text-anchor="middle" stroke="#33331d" stroke-width="0.15">100.76</text>
<text transform="translate(270.40,311.65) scale(0.815,1)" font-size="8.3" fill="#33331d" text-anchor="middle" stroke="#33331d" stroke-width="0.15">78%</text>
<text transform="translate(310.77,311.65) scale(0.815,1)" font-size="8.3" fill="#33331d" text-anchor="middle" stroke="#33331d" stroke-width="0.15">-3.08E-03</text>
<text transform="translate(351.14,311.65) scale(0.815,1)" font-size="8.3" fill="#33331d" text-anchor="middle" stroke="#33331d" stroke-width="0.15">51%</text>
<text transform="translate(28.18,321.56) scale(0.815,1)" font-size="8.3" fill="#33331d" text-anchor="middle" stroke="#33331d" stroke-width="0.15">S5</text>
<text transform="translate(68.55,321.56) scale(0.815,1)" font-size="8.3" fill="#33331d" text-anchor="middle" stroke="#33331d" stroke-width="0.15">15%</text>
<text transform="translate(108.92,321.56) scale(0.815,1)" font-size="8.3" fill="#33331d" text-anchor="middle" stroke="#33331d" stroke-width="0.15">65%</text>
<text transform="translate(149.29,321.56) scale(0.815,1)" font-size="8.3" fill="#33331d" text-anchor="middle" stroke="#33331d" stroke-width="0.15">20%</text>
<text transform="translate(189.66,321.56) scale(0.815,1)" font-size="8.3" fill="#33331d" text-anchor="middle" stroke="#33331d" stroke-width="0.15">0%</text>
<text transform="translate(230.03,321.56) scale(0.815,1)" font-size="8.3" fill="#33331d" text-anchor="middle" stroke="#33331d" stroke-width="0.15">87.11</text>
<text transform="translate(270.40,321.56) scale(0.815,1)" font-size="8.3" fill="#33331d" text-anchor="middle" stroke="#33331d" stroke-width="0.15">84%</text>
<text transform="translate(310.77,321.56) scale(0.815,1)" font-size="8.3" fill="#33331d" text-anchor="middle" stroke="#33331d" stroke-width="0.15">-3.12E-03</text>
<text transform="translate(351.14,321.56) scale(0.815,1)" font-size="8.3" fill="#33331d" text-anchor="middle" stroke="#33331d" stroke-width="0.15">51%</text>
<text transform="translate(28.18,331.48) scale(0.815,1)" font-size="8.3" fill="#33331d" text-anchor="middle" stroke="#33331d" stroke-width="0.15">S20</text>
<text transform="translate(68.55,331.48) scale(0.815,1)" font-size="8.3" fill="#33331d" text-anchor="middle" stroke="#33331d" stroke-width="0.15">15%</text>
<text transform="translate(108.92,331.48) scale(0.815,1)" font-size="8.3" fill="#33331d" text-anchor="middle" stroke="#33331d" stroke-width="0.15">60%</text>
<text transform="translate(149.29,331.48) scale(0.815,1)" font-size="8.3" fill="#33331d" text-anchor="middle" stroke="#33331d" stroke-width="0.15">25%</text>
<text transform="translate(189.66,331.48) scale(0.815,1)" font-size="8.3" fill="#33331d" text-anchor="middle" stroke="#33331d" stroke-width="0.15">0%</text>
<text transform="translate(230.03,331.48) scale(0.815,1)" font-size="8.3" fill="#33331d" text-anchor="middle" stroke="#33331d" stroke-width="0.15">80.51</text>
<text transform="translate(270.40,331.48) scale(0.815,1)" font-size="8.3" fill="#33331d" text-anchor="middle" stroke="#33331d" stroke-width="0.15">87%</text>
<text transform="translate(310.77,331.48) scale(0.815,1)" font-size="8.3" fill="#33331d" text-anchor="middle" stroke="#33331d" stroke-width="0.15">-3.15E-03</text>
<text transform="translate(351.14,331.48) scale(0.815,1)" font-size="8.3" fill="#33331d" text-anchor="middle" stroke="#33331d" stroke-width="0.15">52%</text>
<text transform="translate(28.18,341.39) scale(0.815,1)" font-size="8.3" fill="#33331d" text-anchor="middle" stroke="#33331d" stroke-width="0.15">S16</text>
<text transform="translate(68.55,341.39) scale(0.815,1)" font-size="8.3" fill="#33331d" text-anchor="middle" stroke="#33331d" stroke-width="0.15">20%</text>
<text transform="translate(108.92,341.39) scale(0.815,1)" font-size="8.3" fill="#33331d" text-anchor="middle" stroke="#33331d" stroke-width="0.15">80%</text>
<text transform="translate(149.29,341.39) scale(0.815,1)" font-size="8.3" fill="#33331d" text-anchor="middle" stroke="#33331d" stroke-width="0.15">0%</text>
<text transform="translate(189.66,341.39) scale(0.815,1)" font-size="8.3" fill="#33331d" text-anchor="middle" stroke="#33331d" stroke-width="0.15">0%</text>
<text transform="translate(230.03,341.39) scale(0.815,1)" font-size="8.3" fill="#33331d" text-anchor="middle" stroke="#33331d" stroke-width="0.15">107.96</text>
<text transform="translate(270.40,341.39) scale(0.815,1)" font-size="8.3" fill="#33331d" text-anchor="middle" stroke="#33331d" stroke-width="0.15">74%</text>
<text transform="translate(310.77,341.39) scale(0.815,1)" font-size="8.3" fill="#33331d" text-anchor="middle" stroke="#33331d" stroke-width="0.15">-4.28E-03</text>
<text transform="translate(351.14,341.39) scale(0.815,1)" font-size="8.3" fill="#33331d" text-anchor="middle" stroke="#33331d" stroke-width="0.15">66%</text>
<text transform="translate(28.18,351.31) scale(0.815,1)" font-size="8.3" fill="#33331d" text-anchor="middle" stroke="#33331d" stroke-width="0.15">S9</text>
<text transform="translate(68.55,351.31) scale(0.815,1)" font-size="8.3" fill="#33331d" text-anchor="middle" stroke="#33331d" stroke-width="0.15">20%</text>
<text transform="translate(108.92,351.31) scale(0.815,1)" font-size="8.3" fill="#33331d" text-anchor="middle" stroke="#33331d" stroke-width="0.15">75%</text>
<text transform="translate(149.29,351.31) scale(0.815,1)" font-size="8.3" fill="#33331d" text-anchor="middle" stroke="#33331d" stroke-width="0.15">5%</text>
<text transform="translate(189.66,351.31) scale(0.815,1)" font-size="8.3" fill="#33331d" text-anchor="middle" stroke="#33331d" stroke-width="0.15">0%</text>
<text transform="translate(230.03,351.31) scale(0.815,1)" font-size="8.3" fill="#33331d" text-anchor="middle" stroke="#33331d" stroke-width="0.15">99.39</text>
<text transform="translate(270.40,351.31) scale(0.815,1)" font-size="8.3" fill="#33331d" text-anchor="middle" stroke="#33331d" stroke-width="0.15">78%</text>
<text transform="translate(310.77,351.31) scale(0.815,1)" font-size="8.3" fill="#33331d" text-anchor="middle" stroke="#33331d" stroke-width="0.15">-4.30E-03</text>
<text transform="translate(351.14,351.31) scale(0.815,1)" font-size="8.3" fill="#33331d" text-anchor="middle" stroke="#33331d" stroke-width="0.15">66%</text>
<text transform="translate(28.18,361.22) scale(0.815,1)" font-size="8.3" fill="#33331d" text-anchor="middle" stroke="#33331d" stroke-width="0.15">S12</text>
<text transform="translate(68.55,361.22) scale(0.815,1)" font-size="8.3" fill="#33331d" text-anchor="middle" stroke="#33331d" stroke-width="0.15">20%</text>
<text transform="translate(108.92,361.22) scale(0.815,1)" font-size="8.3" fill="#33331d" text-anchor="middle" stroke="#33331d" stroke-width="0.15">60%</text>
<text transform="translate(149.29,361.22) scale(0.815,1)" font-size="8.3" fill="#33331d" text-anchor="middle" stroke="#33331d" stroke-width="0.15">20%</text>
<text transform="translate(189.66,361.22) scale(0.815,1)" font-size="8.3" fill="#33331d" text-anchor="middle" stroke="#33331d" stroke-width="0.15">0%</text>
<text transform="translate(230.03,361.22) scale(0.815,1)" font-size="8.3" fill="#33331d" text-anchor="middle" stroke="#33331d" stroke-width="0.15">80.24</text>
<text transform="translate(270.40,361.22) scale(0.815,1)" font-size="8.3" fill="#33331d" text-anchor="middle" stroke="#33331d" stroke-width="0.15">87%</text>
<text transform="translate(310.77,361.22) scale(0.815,1)" font-size="8.3" fill="#33331d" text-anchor="middle" stroke="#33331d" stroke-width="0.15">-4.38E-03</text>
<text transform="translate(351.14,361.22) scale(0.815,1)" font-size="8.3" fill="#33331d" text-anchor="middle" stroke="#33331d" stroke-width="0.15">67%</text>
<text transform="translate(28.18,371.14) scale(0.815,1)" font-size="8.3" fill="#33331d" text-anchor="middle" stroke="#33331d" stroke-width="0.15">S22</text>
<text transform="translate(68.55,371.14) scale(0.815,1)" font-size="8.3" fill="#33331d" text-anchor="middle" stroke="#33331d" stroke-width="0.15">25%</text>
<text transform="translate(108.92,371.14) scale(0.815,1)" font-size="8.3" fill="#33331d" text-anchor="middle" stroke="#33331d" stroke-width="0.15">40%</text>
<text transform="translate(149.29,371.14) scale(0.815,1)" font-size="8.3" fill="#33331d" text-anchor="middle" stroke="#33331d" stroke-width="0.15">0%</text>
<text transform="translate(189.66,371.14) scale(0.815,1)" font-size="8.3" fill="#33331d" text-anchor="middle" stroke="#33331d" stroke-width="0.15">35%</text>
<text transform="translate(230.03,371.14) scale(0.815,1)" font-size="8.3" fill="#33331d" text-anchor="middle" stroke="#33331d" stroke-width="0.15">146.87</text>
<text transform="translate(270.40,371.14) scale(0.815,1)" font-size="8.3" fill="#33331d" text-anchor="middle" stroke="#33331d" stroke-width="0.15">56%</text>
<text transform="translate(310.77,371.14) scale(0.815,1)" font-size="8.3" fill="#33331d" text-anchor="middle" stroke="#33331d" stroke-width="0.15">-5.48E-03</text>
<text transform="translate(351.14,371.14) scale(0.815,1)" font-size="8.3" fill="#33331d" text-anchor="middle" stroke="#33331d" stroke-width="0.15">82%</text>
<text transform="translate(28.18,381.05) scale(0.815,1)" font-size="8.3" fill="#33331d" text-anchor="middle" stroke="#33331d" stroke-width="0.15">S21</text>
<text transform="translate(68.55,381.05) scale(0.815,1)" font-size="8.3" fill="#33331d" text-anchor="middle" stroke="#33331d" stroke-width="0.15">25%</text>
<text transform="translate(108.92,381.05) scale(0.815,1)" font-size="8.3" fill="#33331d" text-anchor="middle" stroke="#33331d" stroke-width="0.15">10%</text>
<text transform="translate(149.29,381.05) scale(0.815,1)" font-size="8.3" fill="#33331d" text-anchor="middle" stroke="#33331d" stroke-width="0.15">15%</text>
<text transform="translate(189.66,381.05) scale(0.815,1)" font-size="8.3" fill="#33331d" text-anchor="middle" stroke="#33331d" stroke-width="0.15">50%</text>
<text transform="translate(230.03,381.05) scale(0.815,1)" font-size="8.3" fill="#33331d" text-anchor="middle" stroke="#33331d" stroke-width="0.15">145.97</text>
<text transform="translate(270.40,381.05) scale(0.815,1)" font-size="8.3" fill="#33331d" text-anchor="middle" stroke="#33331d" stroke-width="0.15">56%</text>
<text transform="translate(310.77,381.05) scale(0.815,1)" font-size="8.3" fill="#33331d" text-anchor="middle" stroke="#33331d" stroke-width="0.15">-5.53E-03</text>
<text transform="translate(351.14,381.05) scale(0.815,1)" font-size="8.3" fill="#33331d" text-anchor="middle" stroke="#33331d" stroke-width="0.15">82%</text>
<text transform="translate(28.18,390.97) scale(0.815,1)" font-size="8.3" fill="#33331d" text-anchor="middle" stroke="#33331d" stroke-width="0.15">S18</text>
<text transform="translate(68.55,390.97) scale(0.815,1)" font-size="8.3" fill="#33331d" text-anchor="middle" stroke="#33331d" stroke-width="0.15">25%</text>
<text transform="translate(108.92,390.97) scale(0.815,1)" font-size="8.3" fill="#33331d" text-anchor="middle" stroke="#33331d" stroke-width="0.15">75%</text>
<text transform="translate(149.29,390.97) scale(0.815,1)" font-size="8.3" fill="#33331d" text-anchor="middle" stroke="#33331d" stroke-width="0.15">0%</text>
<text transform="translate(189.66,390.97) scale(0.815,1)" font-size="8.3" fill="#33331d" text-anchor="middle" stroke="#33331d" stroke-width="0.15">0%</text>
<text transform="translate(230.03,390.97) scale(0.815,1)" font-size="8.3" fill="#33331d" text-anchor="middle" stroke="#33331d" stroke-width="0.15">101.29</text>
<text transform="translate(270.40,390.97) scale(0.815,1)" font-size="8.3" fill="#33331d" text-anchor="middle" stroke="#33331d" stroke-width="0.15">77%</text>
<text transform="translate(310.77,390.97) scale(0.815,1)" font-size="8.3" fill="#33331d" text-anchor="middle" stroke="#33331d" stroke-width="0.15">-5.56E-03</text>
<text transform="translate(351.14,390.97) scale(0.815,1)" font-size="8.3" fill="#33331d" text-anchor="middle" stroke="#33331d" stroke-width="0.15">83%</text>
<text transform="translate(28.18,400.88) scale(0.815,1)" font-size="8.3" fill="#33331d" text-anchor="middle" stroke="#33331d" stroke-width="0.15">S29</text>
<text transform="translate(68.55,400.88) scale(0.815,1)" font-size="8.3" fill="#33331d" text-anchor="middle" stroke="#33331d" stroke-width="0.15">25%</text>
<text transform="translate(108.92,400.88) scale(0.815,1)" font-size="8.3" fill="#33331d" text-anchor="middle" stroke="#33331d" stroke-width="0.15">0%</text>
<text transform="translate(149.29,400.88) scale(0.815,1)" font-size="8.3" fill="#33331d" text-anchor="middle" stroke="#33331d" stroke-width="0.15">25%</text>
<text transform="translate(189.66,400.88) scale(0.815,1)" font-size="8.3" fill="#33331d" text-anchor="middle" stroke="#33331d" stroke-width="0.15">50%</text>
<text transform="translate(230.03,400.88) scale(0.815,1)" font-size="8.3" fill="#33331d" text-anchor="middle" stroke="#33331d" stroke-width="0.15">132.34</text>
<text transform="translate(270.40,400.88) scale(0.815,1)" font-size="8.3" fill="#33331d" text-anchor="middle" stroke="#33331d" stroke-width="0.15">63%</text>
<text transform="translate(310.77,400.88) scale(0.815,1)" font-size="8.3" fill="#33331d" text-anchor="middle" stroke="#33331d" stroke-width="0.15">-5.58E-03</text>
<text transform="translate(351.14,400.88) scale(0.815,1)" font-size="8.3" fill="#33331d" text-anchor="middle" stroke="#33331d" stroke-width="0.15">83%</text>
<text transform="translate(28.18,410.80) scale(0.815,1)" font-size="8.3" fill="#33331d" text-anchor="middle" stroke="#33331d" stroke-width="0.15">S27</text>
<text transform="translate(68.55,410.80) scale(0.815,1)" font-size="8.3" fill="#33331d" text-anchor="middle" stroke="#33331d" stroke-width="0.15">30%</text>
<text transform="translate(108.92,410.80) scale(0.815,1)" font-size="8.3" fill="#33331d" text-anchor="middle" stroke="#33331d" stroke-width="0.15">25%</text>
<text transform="translate(149.29,410.80) scale(0.815,1)" font-size="8.3" fill="#33331d" text-anchor="middle" stroke="#33331d" stroke-width="0.15">5%</text>
<text transform="translate(189.66,410.80) scale(0.815,1)" font-size="8.3" fill="#33331d" text-anchor="middle" stroke="#33331d" stroke-width="0.15">40%</text>
<text transform="translate(230.03,410.80) scale(0.815,1)" font-size="8.3" fill="#33331d" text-anchor="middle" stroke="#33331d" stroke-width="0.15">129.34</text>
<text transform="translate(270.40,410.80) scale(0.815,1)" font-size="8.3" fill="#33331d" text-anchor="middle" stroke="#33331d" stroke-width="0.15">64%</text>
<text transform="translate(310.77,410.80) scale(0.815,1)" font-size="8.3" fill="#33331d" text-anchor="middle" stroke="#33331d" stroke-width="0.15">-6.75E-03</text>
<text transform="translate(351.14,410.80) scale(0.815,1)" font-size="8.3" fill="#33331d" text-anchor="middle" stroke="#33331d" stroke-width="0.15">98%</text>
<text transform="translate(28.18,420.71) scale(0.815,1)" font-size="8.3" fill="#33331d" text-anchor="middle" stroke="#33331d" stroke-width="0.15">S4</text>
<text transform="translate(68.55,420.71) scale(0.815,1)" font-size="8.3" fill="#33331d" text-anchor="middle" stroke="#33331d" stroke-width="0.15">30%</text>
<text transform="translate(108.92,420.71) scale(0.815,1)" font-size="8.3" fill="#33331d" text-anchor="middle" stroke="#33331d" stroke-width="0.15">70%</text>
<text transform="translate(149.29,420.71) scale(0.815,1)" font-size="8.3" fill="#33331d" text-anchor="middle" stroke="#33331d" stroke-width="0.15">0%</text>
<text transform="translate(189.66,420.71) scale(0.815,1)" font-size="8.3" fill="#33331d" text-anchor="middle" stroke="#33331d" stroke-width="0.15">0%</text>
<text transform="translate(230.03,420.71) scale(0.815,1)" font-size="8.3" fill="#33331d" text-anchor="middle" stroke="#33331d" stroke-width="0.15">94.15</text>
<text transform="translate(270.40,420.71) scale(0.815,1)" font-size="8.3" fill="#33331d" text-anchor="middle" stroke="#33331d" stroke-width="0.15">81%</text>
<text transform="translate(310.77,420.71) scale(0.815,1)" font-size="8.3" fill="#33331d" text-anchor="middle" stroke="#33331d" stroke-width="0.15">-6.78E-03</text>
<text transform="translate(351.14,420.71) scale(0.815,1)" font-size="8.3" fill="#33331d" text-anchor="middle" stroke="#33331d" stroke-width="0.15">98%</text>
<text transform="translate(28.18,430.63) scale(0.815,1)" font-size="8.3" fill="#33331d" text-anchor="middle" stroke="#33331d" stroke-width="0.15">S19</text>
<text transform="translate(68.55,430.63) scale(0.815,1)" font-size="8.3" fill="#33331d" text-anchor="middle" stroke="#33331d" stroke-width="0.15">30%</text>
<text transform="translate(108.92,430.63) scale(0.815,1)" font-size="8.3" fill="#33331d" text-anchor="middle" stroke="#33331d" stroke-width="0.15">65%</text>
<text transform="translate(149.29,430.63) scale(0.815,1)" font-size="8.3" fill="#33331d" text-anchor="middle" stroke="#33331d" stroke-width="0.15">5%</text>
<text transform="translate(189.66,430.63) scale(0.815,1)" font-size="8.3" fill="#33331d" text-anchor="middle" stroke="#33331d" stroke-width="0.15">0%</text>
<text transform="translate(230.03,430.63) scale(0.815,1)" font-size="8.3" fill="#33331d" text-anchor="middle" stroke="#33331d" stroke-width="0.15">87.84</text>
<text transform="translate(270.40,430.63) scale(0.815,1)" font-size="8.3" fill="#33331d" text-anchor="middle" stroke="#33331d" stroke-width="0.15">84%</text>
<text transform="translate(310.77,430.63) scale(0.815,1)" font-size="8.3" fill="#33331d" text-anchor="middle" stroke="#33331d" stroke-width="0.15">-6.80E-03</text>
<text transform="translate(351.14,430.63) scale(0.815,1)" font-size="8.3" fill="#33331d" text-anchor="middle" stroke="#33331d" stroke-width="0.15">99%</text>
<text transform="translate(28.18,440.54) scale(0.815,1)" font-size="8.3" fill="#33331d" text-anchor="middle" stroke="#33331d" stroke-width="0.15">S15</text>
<text transform="translate(68.55,440.54) scale(0.815,1)" font-size="8.3" fill="#33331d" text-anchor="middle" stroke="#33331d" stroke-width="0.15">30%</text>
<text transform="translate(108.92,440.54) scale(0.815,1)" font-size="8.3" fill="#33331d" text-anchor="middle" stroke="#33331d" stroke-width="0.15">40%</text>
<text transform="translate(149.29,440.54) scale(0.815,1)" font-size="8.3" fill="#33331d" text-anchor="middle" stroke="#33331d" stroke-width="0.15">30%</text>
<text transform="translate(189.66,440.54) scale(0.815,1)" font-size="8.3" fill="#33331d" text-anchor="middle" stroke="#33331d" stroke-width="0.15">0%</text>
<text transform="translate(230.03,440.54) scale(0.815,1)" font-size="8.3" fill="#33331d" text-anchor="middle" stroke="#33331d" stroke-width="0.15">53.81</text>
<text transform="translate(270.40,440.54) scale(0.815,1)" font-size="8.3" fill="#33331d" text-anchor="middle" stroke="#33331d" stroke-width="0.15">100%</text>
<text transform="translate(310.77,440.54) scale(0.815,1)" font-size="8.3" fill="#33331d" text-anchor="middle" stroke="#33331d" stroke-width="0.15">-6.91E-03</text>
<text transform="translate(351.14,440.54) scale(0.815,1)" font-size="8.3" fill="#33331d" text-anchor="middle" stroke="#33331d" stroke-width="0.15">100%</text>
<path d="M246.72 114.80 L250.22 114.80 L250.22 118.30Z" stroke="none" fill="#d0312d" stroke-width="1" />
<line x1="8.00" y1="452.06" x2="290.59" y2="452.06" stroke="#3a3a3a" stroke-width="0.7" />
<line x1="8.00" y1="471.89" x2="290.59" y2="471.89" stroke="#3a3a3a" stroke-width="0.7" />
<line x1="8.00" y1="491.72" x2="290.59" y2="491.72" stroke="#3a3a3a" stroke-width="0.7" />
<line x1="48.37" y1="461.98" x2="290.59" y2="461.98" stroke="#3a3a3a" stroke-width="0.7" />
<line x1="48.37" y1="481.81" x2="290.59" y2="481.81" stroke="#3a3a3a" stroke-width="0.7" />
<line x1="8.00" y1="452.06" x2="8.00" y2="491.72" stroke="#3a3a3a" stroke-width="0.7" />
<line x1="48.37" y1="452.06" x2="48.37" y2="491.72" stroke="#3a3a3a" stroke-width="0.7" />
<line x1="88.74" y1="452.06" x2="88.74" y2="491.72" stroke="#3a3a3a" stroke-width="0.7" />
<line x1="129.11" y1="452.06" x2="129.11" y2="491.72" stroke="#3a3a3a" stroke-width="0.7" />
<line x1="169.48" y1="452.06" x2="169.48" y2="491.72" stroke="#3a3a3a" stroke-width="0.7" />
<line x1="209.85" y1="452.06" x2="209.85" y2="491.72" stroke="#3a3a3a" stroke-width="0.7" />
<line x1="250.22" y1="452.06" x2="250.22" y2="491.72" stroke="#3a3a3a" stroke-width="0.7" />
<line x1="290.59" y1="452.06" x2="290.59" y2="491.72" stroke="#3a3a3a" stroke-width="0.7" />
<text transform="translate(28.18,465.38) scale(0.815,1)" font-size="8.3" fill="#33331d" text-anchor="middle" stroke="#33331d" stroke-width="0.2">Impacts</text>
<text transform="translate(28.18,485.21) scale(0.815,1)" font-size="8.3" fill="#33331d" text-anchor="middle" stroke="#33331d" stroke-width="0.2">Cost</text>
<text transform="translate(230.03,460.62) scale(0.815,1)" font-size="8.3" fill="#33331d" text-anchor="middle" stroke="#33331d" stroke-width="0.2">Min</text>
<text transform="translate(270.40,460.62) scale(0.815,1)" font-size="8.3" fill="#33331d" text-anchor="middle" stroke="#33331d" stroke-width="0.2">Max</text>
<text transform="translate(230.03,470.54) scale(0.815,1)" font-size="8.3" fill="#33331d" text-anchor="middle" stroke="#33331d" stroke-width="0.2">-6.91E-03</text>
<text transform="translate(270.40,470.54) scale(0.815,1)" font-size="8.3" fill="#33331d" text-anchor="middle" stroke="#33331d" stroke-width="0.2">8.56E-04</text>
<text transform="translate(230.03,480.45) scale(0.815,1)" font-size="8.3" fill="#33331d" text-anchor="middle" stroke="#33331d" stroke-width="0.2">Min</text>
<text transform="translate(270.40,480.45) scale(0.815,1)" font-size="8.3" fill="#33331d" text-anchor="middle" stroke="#33331d" stroke-width="0.2">Max</text>
<text transform="translate(230.03,490.37) scale(0.815,1)" font-size="8.3" fill="#33331d" text-anchor="middle" stroke="#33331d" stroke-width="0.2">53.81</text>
<text transform="translate(270.40,490.37) scale(0.815,1)" font-size="8.3" fill="#33331d" text-anchor="middle" stroke="#33331d" stroke-width="0.2">264.64</text>
<defs><pattern id="stp" width="6" height="9" patternUnits="userSpaceOnUse"><rect width="6" height="9" fill="#9dc1e7"/><rect y="0" width="6" height="0.7" fill="#b2cfee"/><rect y="2.6" width="6" height="0.6" fill="#aac9ec"/><rect y="4.1" width="6" height="0.7" fill="#b4d0ef"/><rect y="6.9" width="6" height="0.6" fill="#acc9ec"/></pattern></defs>
<rect x="371.73" y="115.30" width="314.00" height="168.00" fill="#fff" />
<text transform="translate(528.10,126.20) scale(0.88,1)" font-size="7.2" fill="#4d4d4d" text-anchor="middle" textLength="143.9" lengthAdjust="spacing">(A) SCORED WEIGHTED IMPACTS</text>
<text x="384.50" y="264.00" font-size="5" fill="#595959" text-anchor="middle" >0</text>
<text x="384.50" y="247.97" font-size="5" fill="#595959" text-anchor="middle" >1</text>
<text x="384.50" y="231.94" font-size="5" fill="#595959" text-anchor="middle" >2</text>
<text x="384.50" y="215.91" font-size="5" fill="#595959" text-anchor="middle" >3</text>
<text x="384.50" y="199.88" font-size="5" fill="#595959" text-anchor="middle" >4</text>
<text x="384.50" y="183.85" font-size="5" fill="#595959" text-anchor="middle" >5</text>
<text x="384.50" y="167.82" font-size="5" fill="#595959" text-anchor="middle" >6</text>
<text x="384.50" y="151.79" font-size="5" fill="#595959" text-anchor="middle" >7</text>
<text x="384.50" y="135.76" font-size="5" fill="#595959" text-anchor="middle" >8</text>
<path d="M389.70 262.00 L389.70 149.79 L436.83 149.79 L436.83 181.85 L483.97 181.85 L483.97 197.88 L531.10 197.88 L531.10 181.85 L578.23 181.85 L578.23 181.85 L625.37 181.85 L625.37 197.88 L672.50 197.88 L672.50 262.00 Z" stroke="none" fill="url(#stp)" stroke-width="1" />
<path d="M389.70 262.00 L389.70 149.79 L436.83 149.79 L436.83 181.85 L483.97 181.85 L483.97 197.88 L531.10 197.88 L531.10 181.85 L578.23 181.85 L578.23 181.85 L625.37 181.85 L625.37 197.88 L672.50 197.88 L672.50 262.00" stroke="#86acd9" fill="none" stroke-width="0.8" />
<line x1="389.70" y1="133.76" x2="389.70" y2="262.00" stroke="#bfbfbf" stroke-width="0.6" />
<text x="413.27" y="271.80" font-size="4.9" fill="#505050" text-anchor="middle" >[0%, 17%]</text>
<text x="460.40" y="271.80" font-size="4.9" fill="#505050" text-anchor="middle" >(17%, 33%]</text>
<text x="507.53" y="271.80" font-size="4.9" fill="#505050" text-anchor="middle" >(33%, 50%]</text>
<text x="554.67" y="271.80" font-size="4.9" fill="#505050" text-anchor="middle" >(50%, 67%]</text>
<text x="601.80" y="271.80" font-size="4.9" fill="#505050" text-anchor="middle" >(67%, 83%]</text>
<text x="648.93" y="271.80" font-size="4.9" fill="#505050" text-anchor="middle" >(83%, 100%]</text>
<rect x="686.00" y="115.30" width="298.00" height="168.00" fill="#fff" />
<text transform="translate(832.50,126.00) scale(0.88,1)" font-size="7.2" fill="#4d4d4d" text-anchor="middle" textLength="126.4" lengthAdjust="spacing">(B) SCORED RECOVERY RATIO</text>
<text x="688.40" y="264.20" font-size="5" fill="#595959" text-anchor="middle" >0</text>
<text x="688.40" y="245.82" font-size="5" fill="#595959" text-anchor="middle" >2</text>
<text x="688.40" y="227.44" font-size="5" fill="#595959" text-anchor="middle" >4</text>
<text x="688.40" y="209.06" font-size="5" fill="#595959" text-anchor="middle" >6</text>
<text x="688.40" y="190.68" font-size="5" fill="#595959" text-anchor="middle" >8</text>
<text x="688.40" y="172.30" font-size="5" fill="#595959" text-anchor="middle" >10</text>
<text x="688.40" y="153.92" font-size="5" fill="#595959" text-anchor="middle" >12</text>
<text x="688.40" y="135.54" font-size="5" fill="#595959" text-anchor="middle" >14</text>
<path d="M695.80 262.20 L695.80 234.63 L743.10 234.63 L743.10 243.82 L790.40 243.82 L790.40 253.01 L837.70 253.01 L837.70 216.25 L885.00 216.25 L885.00 151.92 L932.30 151.92 L932.30 197.87 L979.60 197.87 L979.60 262.20 Z" stroke="none" fill="url(#stp)" stroke-width="1" />
<path d="M695.80 262.20 L695.80 234.63 L743.10 234.63 L743.10 243.82 L790.40 243.82 L790.40 253.01 L837.70 253.01 L837.70 216.25 L885.00 216.25 L885.00 151.92 L932.30 151.92 L932.30 197.87 L979.60 197.87 L979.60 262.20" stroke="#86acd9" fill="none" stroke-width="0.8" />
<line x1="695.80" y1="133.54" x2="695.80" y2="262.20" stroke="#bfbfbf" stroke-width="0.6" />
<text x="719.45" y="271.80" font-size="4.9" fill="#505050" text-anchor="middle" >[0%, 17%]</text>
<text x="766.75" y="271.80" font-size="4.9" fill="#505050" text-anchor="middle" >(17%, 33%]</text>
<text x="814.05" y="271.80" font-size="4.9" fill="#505050" text-anchor="middle" >(33%, 50%]</text>
<text x="861.35" y="271.80" font-size="4.9" fill="#505050" text-anchor="middle" >(50%, 67%]</text>
<text x="908.65" y="271.80" font-size="4.9" fill="#505050" text-anchor="middle" >(67%, 83%]</text>
<text x="955.95" y="271.80" font-size="4.9" fill="#505050" text-anchor="middle" >(83%, 100%]</text>
<rect x="394.30" y="289.00" width="579.10" height="217.00" fill="#fff" stroke="#d9d9d9" stroke-width="0.8" />
<text x="969.00" y="476.70" font-size="5.0" fill="#595959" text-anchor="end" >0%</text>
<text x="969.00" y="447.06" font-size="5.0" fill="#595959" text-anchor="end" >20%</text>
<text x="969.00" y="417.42" font-size="5.0" fill="#595959" text-anchor="end" >40%</text>
<text x="969.00" y="387.78" font-size="5.0" fill="#595959" text-anchor="end" >60%</text>
<text x="969.00" y="358.14" font-size="5.0" fill="#595959" text-anchor="end" >80%</text>
<text x="969.00" y="328.50" font-size="5.0" fill="#595959" text-anchor="end" >100%</text>
<text x="969.00" y="298.86" font-size="5.0" fill="#595959" text-anchor="end" >120%</text>
<line x1="402.10" y1="474.10" x2="949.10" y2="474.10" stroke="#d9d9d9" stroke-width="0.7" />
<rect x="408.42" y="474.10" width="5.60" height="0.00" fill="#5b97d2" />
<text x="411.22" y="484.10" font-size="5.1" fill="#555" text-anchor="middle" >S23</text>
<rect x="426.65" y="460.40" width="5.60" height="13.70" fill="#5b97d2" />
<text x="429.45" y="484.10" font-size="5.1" fill="#555" text-anchor="middle" >S30</text>
<rect x="444.88" y="451.19" width="5.60" height="22.91" fill="#5b97d2" />
<text x="447.68" y="484.10" font-size="5.1" fill="#555" text-anchor="middle" >S26</text>
<rect x="463.12" y="428.35" width="5.60" height="45.75" fill="#5b97d2" />
<text x="465.92" y="484.10" font-size="5.1" fill="#555" text-anchor="middle" >S24</text>
<rect x="481.35" y="437.49" width="5.60" height="36.61" fill="#5b97d2" />
<text x="484.15" y="484.10" font-size="5.1" fill="#555" text-anchor="middle" >S25</text>
<rect x="499.58" y="382.61" width="5.60" height="91.49" fill="#5b97d2" />
<text x="502.38" y="484.10" font-size="5.1" fill="#555" text-anchor="middle" >S1</text>
<rect x="517.82" y="368.27" width="5.60" height="105.83" fill="#5b97d2" />
<text x="520.62" y="484.10" font-size="5.1" fill="#555" text-anchor="middle" >S2</text>
<rect x="536.05" y="373.15" width="5.60" height="100.95" fill="#5b97d2" />
<text x="538.85" y="484.10" font-size="5.1" fill="#555" text-anchor="middle" >S13</text>
<rect x="554.28" y="358.47" width="5.60" height="115.63" fill="#5b97d2" />
<text x="557.08" y="484.10" font-size="5.1" fill="#555" text-anchor="middle" >S10</text>
<rect x="572.52" y="353.74" width="5.60" height="120.36" fill="#5b97d2" />
<text x="575.32" y="484.10" font-size="5.1" fill="#555" text-anchor="middle" >S11</text>
<rect x="590.75" y="349.17" width="5.60" height="124.93" fill="#5b97d2" />
<text x="593.55" y="484.10" font-size="5.1" fill="#555" text-anchor="middle" >S17</text>
<rect x="608.98" y="423.41" width="5.60" height="50.69" fill="#5b97d2" />
<text x="611.78" y="484.10" font-size="5.1" fill="#555" text-anchor="middle" >S28</text>
<rect x="627.22" y="372.88" width="5.60" height="101.22" fill="#5b97d2" />
<text x="630.02" y="484.10" font-size="5.1" fill="#555" text-anchor="middle" >S3</text>
<rect x="645.45" y="368.39" width="5.60" height="105.71" fill="#5b97d2" />
<text x="648.25" y="484.10" font-size="5.1" fill="#555" text-anchor="middle" >S6</text>
<rect x="663.68" y="363.64" width="5.60" height="110.46" fill="#5b97d2" />
<text x="666.48" y="484.10" font-size="5.1" fill="#555" text-anchor="middle" >S8</text>
<rect x="681.92" y="349.29" width="5.60" height="124.81" fill="#5b97d2" />
<text x="684.72" y="484.10" font-size="5.1" fill="#555" text-anchor="middle" >S14</text>
<rect x="700.15" y="358.90" width="5.60" height="115.20" fill="#5b97d2" />
<text x="702.95" y="484.10" font-size="5.1" fill="#555" text-anchor="middle" >S7</text>
<rect x="718.38" y="349.31" width="5.60" height="124.79" fill="#5b97d2" />
<text x="721.18" y="484.10" font-size="5.1" fill="#555" text-anchor="middle" >S5</text>
<rect x="736.62" y="344.67" width="5.60" height="129.43" fill="#5b97d2" />
<text x="739.42" y="484.10" font-size="5.1" fill="#555" text-anchor="middle" >S20</text>
<rect x="754.85" y="363.96" width="5.60" height="110.14" fill="#5b97d2" />
<text x="757.65" y="484.10" font-size="5.1" fill="#555" text-anchor="middle" >S16</text>
<rect x="773.08" y="357.94" width="5.60" height="116.16" fill="#5b97d2" />
<text x="775.88" y="484.10" font-size="5.1" fill="#555" text-anchor="middle" >S9</text>
<rect x="791.32" y="344.48" width="5.60" height="129.62" fill="#5b97d2" />
<text x="794.12" y="484.10" font-size="5.1" fill="#555" text-anchor="middle" >S12</text>
<rect x="809.55" y="391.32" width="5.60" height="82.78" fill="#5b97d2" />
<text x="812.35" y="484.10" font-size="5.1" fill="#555" text-anchor="middle" >S22</text>
<rect x="827.78" y="390.68" width="5.60" height="83.42" fill="#5b97d2" />
<text x="830.58" y="484.10" font-size="5.1" fill="#555" text-anchor="middle" >S21</text>
<rect x="846.02" y="359.28" width="5.60" height="114.82" fill="#5b97d2" />
<text x="848.82" y="484.10" font-size="5.1" fill="#555" text-anchor="middle" >S18</text>
<rect x="864.25" y="381.10" width="5.60" height="93.00" fill="#5b97d2" />
<text x="867.05" y="484.10" font-size="5.1" fill="#555" text-anchor="middle" >S29</text>
<rect x="882.48" y="378.99" width="5.60" height="95.11" fill="#5b97d2" />
<text x="885.28" y="484.10" font-size="5.1" fill="#555" text-anchor="middle" >S27</text>
<rect x="900.72" y="354.26" width="5.60" height="119.84" fill="#5b97d2" />
<text x="903.52" y="484.10" font-size="5.1" fill="#555" text-anchor="middle" >S4</text>
<rect x="918.95" y="349.82" width="5.60" height="124.28" fill="#5b97d2" />
<text x="921.75" y="484.10" font-size="5.1" fill="#555" text-anchor="middle" >S19</text>
<rect x="937.18" y="325.90" width="5.60" height="148.20" fill="#5b97d2" />
<text x="939.98" y="484.10" font-size="5.1" fill="#555" text-anchor="middle" >S15</text>
<polyline points="411.22,474.10 429.45,473.72 447.68,473.47 465.92,472.80 484.15,472.55 502.38,471.52 520.62,470.17 538.85,447.21 557.08,445.88 575.32,445.42 593.55,444.96 611.78,424.94 630.02,423.80 648.25,423.42 666.48,422.84 684.72,421.51 702.95,398.99 721.18,398.23 739.42,397.65 757.65,376.09 775.88,375.71 794.12,374.18 812.35,353.19 830.58,352.23 848.82,351.66 867.05,351.28 885.28,328.95 903.52,328.38 921.75,328.00 939.98,325.90" fill="none" stroke="#e8843f" stroke-width="2.0" stroke-linejoin="round"/>
<rect x="606.70" y="493.60" width="12.90" height="4.00" fill="#5b9bd5" />
<text x="621.00" y="497.70" font-size="5.7" fill="#595959" text-anchor="start" >Scored recovery ratio</text>
<line x1="685.30" y1="495.60" x2="699.70" y2="495.60" stroke="#ed7d31" stroke-width="1.6" />
<text x="700.00" y="497.70" font-size="5.7" fill="#595959" text-anchor="start" >Scored weighted impacts</text>
<rect x="0.00" y="103.00" width="1024.00" height="11.80" fill="#0b0b0b" />
<rect x="0.00" y="103.00" width="8.00" height="566.00" fill="#0b0b0b" />
<text x="28.18" y="113.00" font-size="6.4" fill="#c0c0c0" text-anchor="middle" >A</text>
<line x1="48.37" y1="104.00" x2="48.37" y2="114.80" stroke="#3a3a3a" stroke-width="0.7" />
<text x="68.55" y="113.00" font-size="6.4" fill="#c0c0c0" text-anchor="middle" >B</text>
<line x1="88.74" y1="104.00" x2="88.74" y2="114.80" stroke="#3a3a3a" stroke-width="0.7" />
<text x="108.92" y="113.00" font-size="6.4" fill="#c0c0c0" text-anchor="middle" >C</text>
<line x1="129.11" y1="104.00" x2="129.11" y2="114.80" stroke="#3a3a3a" stroke-width="0.7" />
<text x="149.29" y="113.00" font-size="6.4" fill="#c0c0c0" text-anchor="middle" >D</text>
<line x1="169.48" y1="104.00" x2="169.48" y2="114.80" stroke="#3a3a3a" stroke-width="0.7" />
<text x="189.66" y="113.00" font-size="6.4" fill="#c0c0c0" text-anchor="middle" >E</text>
<line x1="209.85" y1="104.00" x2="209.85" y2="114.80" stroke="#3a3a3a" stroke-width="0.7" />
<text x="230.03" y="113.00" font-size="6.4" fill="#c0c0c0" text-anchor="middle" >F</text>
<line x1="250.22" y1="104.00" x2="250.22" y2="114.80" stroke="#3a3a3a" stroke-width="0.7" />
<text x="270.40" y="113.00" font-size="6.4" fill="#c0c0c0" text-anchor="middle" >G</text>
<line x1="290.59" y1="104.00" x2="290.59" y2="114.80" stroke="#3a3a3a" stroke-width="0.7" />
<text x="310.77" y="113.00" font-size="6.4" fill="#c0c0c0" text-anchor="middle" >H</text>
<line x1="330.96" y1="104.00" x2="330.96" y2="114.80" stroke="#3a3a3a" stroke-width="0.7" />
<text x="351.14" y="113.00" font-size="6.4" fill="#c0c0c0" text-anchor="middle" >I</text>
<line x1="371.33" y1="104.00" x2="371.33" y2="114.80" stroke="#3a3a3a" stroke-width="0.7" />
<text x="391.51" y="113.00" font-size="6.4" fill="#c0c0c0" text-anchor="middle" >J</text>
<line x1="411.70" y1="104.00" x2="411.70" y2="114.80" stroke="#3a3a3a" stroke-width="0.7" />
<text x="431.88" y="113.00" font-size="6.4" fill="#c0c0c0" text-anchor="middle" >K</text>
<line x1="452.07" y1="104.00" x2="452.07" y2="114.80" stroke="#3a3a3a" stroke-width="0.7" />
<text x="472.25" y="113.00" font-size="6.4" fill="#c0c0c0" text-anchor="middle" >L</text>
<line x1="492.44" y1="104.00" x2="492.44" y2="114.80" stroke="#3a3a3a" stroke-width="0.7" />
<text x="512.62" y="113.00" font-size="6.4" fill="#c0c0c0" text-anchor="middle" >M</text>
<line x1="532.81" y1="104.00" x2="532.81" y2="114.80" stroke="#3a3a3a" stroke-width="0.7" />
<text x="552.99" y="113.00" font-size="6.4" fill="#c0c0c0" text-anchor="middle" >N</text>
<line x1="573.18" y1="104.00" x2="573.18" y2="114.80" stroke="#3a3a3a" stroke-width="0.7" />
<text x="593.36" y="113.00" font-size="6.4" fill="#c0c0c0" text-anchor="middle" >O</text>
<line x1="613.55" y1="104.00" x2="613.55" y2="114.80" stroke="#3a3a3a" stroke-width="0.7" />
<text x="633.73" y="113.00" font-size="6.4" fill="#c0c0c0" text-anchor="middle" >P</text>
<line x1="653.92" y1="104.00" x2="653.92" y2="114.80" stroke="#3a3a3a" stroke-width="0.7" />
<text x="674.10" y="113.00" font-size="6.4" fill="#c0c0c0" text-anchor="middle" >Q</text>
<line x1="694.29" y1="104.00" x2="694.29" y2="114.80" stroke="#3a3a3a" stroke-width="0.7" />
<text x="714.47" y="113.00" font-size="6.4" fill="#c0c0c0" text-anchor="middle" >R</text>
<line x1="734.66" y1="104.00" x2="734.66" y2="114.80" stroke="#3a3a3a" stroke-width="0.7" />
<text x="754.84" y="113.00" font-size="6.4" fill="#c0c0c0" text-anchor="middle" >S</text>
<line x1="775.03" y1="104.00" x2="775.03" y2="114.80" stroke="#3a3a3a" stroke-width="0.7" />
<text x="795.21" y="113.00" font-size="6.4" fill="#c0c0c0" text-anchor="middle" >T</text>
<line x1="815.40" y1="104.00" x2="815.40" y2="114.80" stroke="#3a3a3a" stroke-width="0.7" />
<text x="835.58" y="113.00" font-size="6.4" fill="#c0c0c0" text-anchor="middle" >U</text>
<line x1="855.77" y1="104.00" x2="855.77" y2="114.80" stroke="#3a3a3a" stroke-width="0.7" />
<text x="875.95" y="113.00" font-size="6.4" fill="#c0c0c0" text-anchor="middle" >V</text>
<line x1="896.14" y1="104.00" x2="896.14" y2="114.80" stroke="#3a3a3a" stroke-width="0.7" />
<text x="916.32" y="113.00" font-size="6.4" fill="#c0c0c0" text-anchor="middle" >W</text>
<line x1="936.51" y1="104.00" x2="936.51" y2="114.80" stroke="#3a3a3a" stroke-width="0.7" />
<text x="956.69" y="113.00" font-size="6.4" fill="#c0c0c0" text-anchor="middle" >X</text>
<line x1="976.88" y1="104.00" x2="976.88" y2="114.80" stroke="#3a3a3a" stroke-width="0.7" />
<text x="997.06" y="113.00" font-size="6.4" fill="#c0c0c0" text-anchor="middle" >Y</text>
<line x1="1017.25" y1="104.00" x2="1017.25" y2="114.80" stroke="#3a3a3a" stroke-width="0.7" />
<path d="M6.8 105.5 L6.8 113 L0.5 113 Z" stroke="none" fill="#7a7a7a" stroke-width="1" />
<rect x="0.00" y="541.30" width="8.00" height="9.91" fill="#575757" />
<text x="1.60" y="143.50" font-size="7" fill="#d0d0d0" text-anchor="middle" >1</text>
<line x1="0.00" y1="114.80" x2="8.00" y2="114.80" stroke="#2e2e2e" stroke-width="0.6" />
<text x="1.60" y="152.56" font-size="7" fill="#d0d0d0" text-anchor="middle" >2</text>
<line x1="0.00" y1="144.70" x2="8.00" y2="144.70" stroke="#2e2e2e" stroke-width="0.6" />
<text x="1.60" y="162.47" font-size="7" fill="#d0d0d0" text-anchor="middle" >3</text>
<line x1="0.00" y1="154.61" x2="8.00" y2="154.61" stroke="#2e2e2e" stroke-width="0.6" />
<text x="1.60" y="172.39" font-size="7" fill="#d0d0d0" text-anchor="middle" >4</text>
<line x1="0.00" y1="164.53" x2="8.00" y2="164.53" stroke="#2e2e2e" stroke-width="0.6" />
<text x="1.60" y="182.30" font-size="7" fill="#d0d0d0" text-anchor="middle" >5</text>
<line x1="0.00" y1="174.44" x2="8.00" y2="174.44" stroke="#2e2e2e" stroke-width="0.6" />
<text x="1.60" y="192.22" font-size="7" fill="#d0d0d0" text-anchor="middle" >6</text>
<line x1="0.00" y1="184.36" x2="8.00" y2="184.36" stroke="#2e2e2e" stroke-width="0.6" />
<text x="1.60" y="202.13" font-size="7" fill="#d0d0d0" text-anchor="middle" >7</text>
<line x1="0.00" y1="194.27" x2="8.00" y2="194.27" stroke="#2e2e2e" stroke-width="0.6" />
<text x="1.60" y="212.05" font-size="7" fill="#d0d0d0" text-anchor="middle" >8</text>
<line x1="0.00" y1="204.19" x2="8.00" y2="204.19" stroke="#2e2e2e" stroke-width="0.6" />
<text x="1.60" y="221.96" font-size="7" fill="#d0d0d0" text-anchor="middle" >9</text>
<line x1="0.00" y1="214.10" x2="8.00" y2="214.10" stroke="#2e2e2e" stroke-width="0.6" />
<text x="1.60" y="231.88" font-size="7" fill="#d0d0d0" text-anchor="middle" >10</text>
<line x1="0.00" y1="224.02" x2="8.00" y2="224.02" stroke="#2e2e2e" stroke-width="0.6" />
<text x="1.60" y="241.79" font-size="7" fill="#d0d0d0" text-anchor="middle" >11</text>
<line x1="0.00" y1="233.93" x2="8.00" y2="233.93" stroke="#2e2e2e" stroke-width="0.6" />
<text x="1.60" y="251.71" font-size="7" fill="#d0d0d0" text-anchor="middle" >12</text>
<line x1="0.00" y1="243.85" x2="8.00" y2="243.85" stroke="#2e2e2e" stroke-width="0.6" />
<text x="1.60" y="261.62" font-size="7" fill="#d0d0d0" text-anchor="middle" >13</text>
<line x1="0.00" y1="253.76" x2="8.00" y2="253.76" stroke="#2e2e2e" stroke-width="0.6" />
<text x="1.60" y="271.54" font-size="7" fill="#d0d0d0" text-anchor="middle" >14</text>
<line x1="0.00" y1="263.68" x2="8.00" y2="263.68" stroke="#2e2e2e" stroke-width="0.6" />
<text x="1.60" y="281.45" font-size="7" fill="#d0d0d0" text-anchor="middle" >15</text>
<line x1="0.00" y1="273.59" x2="8.00" y2="273.59" stroke="#2e2e2e" stroke-width="0.6" />
<text x="1.60" y="291.37" font-size="7" fill="#d0d0d0" text-anchor="middle" >16</text>
<line x1="0.00" y1="283.51" x2="8.00" y2="283.51" stroke="#2e2e2e" stroke-width="0.6" />
<text x="1.60" y="301.28" font-size="7" fill="#d0d0d0" text-anchor="middle" >17</text>
<line x1="0.00" y1="293.42" x2="8.00" y2="293.42" stroke="#2e2e2e" stroke-width="0.6" />
<text x="1.60" y="311.20" font-size="7" fill="#d0d0d0" text-anchor="middle" >18</text>
<line x1="0.00" y1="303.34" x2="8.00" y2="303.34" stroke="#2e2e2e" stroke-width="0.6" />
<text x="1.60" y="321.11" font-size="7" fill="#d0d0d0" text-anchor="middle" >19</text>
<line x1="0.00" y1="313.25" x2="8.00" y2="313.25" stroke="#2e2e2e" stroke-width="0.6" />
<text x="1.60" y="331.03" font-size="7" fill="#d0d0d0" text-anchor="middle" >20</text>
<line x1="0.00" y1="323.17" x2="8.00" y2="323.17" stroke="#2e2e2e" stroke-width="0.6" />
<text x="1.60" y="340.94" font-size="7" fill="#d0d0d0" text-anchor="middle" >21</text>
<line x1="0.00" y1="333.08" x2="8.00" y2="333.08" stroke="#2e2e2e" stroke-width="0.6" />
<text x="1.60" y="350.86" font-size="7" fill="#d0d0d0" text-anchor="middle" >22</text>
<line x1="0.00" y1="343.00" x2="8.00" y2="343.00" stroke="#2e2e2e" stroke-width="0.6" />
<text x="1.60" y="360.77" font-size="7" fill="#d0d0d0" text-anchor="middle" >23</text>
<line x1="0.00" y1="352.91" x2="8.00" y2="352.91" stroke="#2e2e2e" stroke-width="0.6" />
<text x="1.60" y="370.69" font-size="7" fill="#d0d0d0" text-anchor="middle" >24</text>
<line x1="0.00" y1="362.83" x2="8.00" y2="362.83" stroke="#2e2e2e" stroke-width="0.6" />
<text x="1.60" y="380.60" font-size="7" fill="#d0d0d0" text-anchor="middle" >25</text>
<line x1="0.00" y1="372.75" x2="8.00" y2="372.75" stroke="#2e2e2e" stroke-width="0.6" />
<text x="1.60" y="390.52" font-size="7" fill="#d0d0d0" text-anchor="middle" >26</text>
<line x1="0.00" y1="382.66" x2="8.00" y2="382.66" stroke="#2e2e2e" stroke-width="0.6" />
<text x="1.60" y="400.43" font-size="7" fill="#d0d0d0" text-anchor="middle" >27</text>
<line x1="0.00" y1="392.57" x2="8.00" y2="392.57" stroke="#2e2e2e" stroke-width="0.6" />
<text x="1.60" y="410.35" font-size="7" fill="#d0d0d0" text-anchor="middle" >28</text>
<line x1="0.00" y1="402.49" x2="8.00" y2="402.49" stroke="#2e2e2e" stroke-width="0.6" />
<text x="1.60" y="420.26" font-size="7" fill="#d0d0d0" text-anchor="middle" >29</text>
<line x1="0.00" y1="412.40" x2="8.00" y2="412.40" stroke="#2e2e2e" stroke-width="0.6" />
<text x="1.60" y="430.18" font-size="7" fill="#d0d0d0" text-anchor="middle" >30</text>
<line x1="0.00" y1="422.32" x2="8.00" y2="422.32" stroke="#2e2e2e" stroke-width="0.6" />
<text x="1.60" y="440.09" font-size="7" fill="#d0d0d0" text-anchor="middle" >31</text>
<line x1="0.00" y1="432.23" x2="8.00" y2="432.23" stroke="#2e2e2e" stroke-width="0.6" />
<text x="1.60" y="450.01" font-size="7" fill="#d0d0d0" text-anchor="middle" >32</text>
<line x1="0.00" y1="442.15" x2="8.00" y2="442.15" stroke="#2e2e2e" stroke-width="0.6" />
<text x="1.60" y="459.92" font-size="7" fill="#d0d0d0" text-anchor="middle" >33</text>
<line x1="0.00" y1="452.06" x2="8.00" y2="452.06" stroke="#2e2e2e" stroke-width="0.6" />
<text x="1.60" y="469.84" font-size="7" fill="#d0d0d0" text-anchor="middle" >34</text>
<line x1="0.00" y1="461.98" x2="8.00" y2="461.98" stroke="#2e2e2e" stroke-width="0.6" />
<text x="1.60" y="479.75" font-size="7" fill="#d0d0d0" text-anchor="middle" >35</text>
<line x1="0.00" y1="471.89" x2="8.00" y2="471.89" stroke="#2e2e2e" stroke-width="0.6" />
<text x="1.60" y="489.67" font-size="7" fill="#d0d0d0" text-anchor="middle" >36</text>
<line x1="0.00" y1="481.81" x2="8.00" y2="481.81" stroke="#2e2e2e" stroke-width="0.6" />
<text x="1.60" y="499.58" font-size="7" fill="#d0d0d0" text-anchor="middle" >37</text>
<line x1="0.00" y1="491.72" x2="8.00" y2="491.72" stroke="#2e2e2e" stroke-width="0.6" />
<text x="1.60" y="509.50" font-size="7" fill="#d0d0d0" text-anchor="middle" >38</text>
<line x1="0.00" y1="501.64" x2="8.00" y2="501.64" stroke="#2e2e2e" stroke-width="0.6" />
<text x="1.60" y="519.41" font-size="7" fill="#d0d0d0" text-anchor="middle" >39</text>
<line x1="0.00" y1="511.55" x2="8.00" y2="511.55" stroke="#2e2e2e" stroke-width="0.6" />
<text x="1.60" y="529.33" font-size="7" fill="#d0d0d0" text-anchor="middle" >40</text>
<line x1="0.00" y1="521.47" x2="8.00" y2="521.47" stroke="#2e2e2e" stroke-width="0.6" />
<text x="1.60" y="539.24" font-size="7" fill="#d0d0d0" text-anchor="middle" >41</text>
<line x1="0.00" y1="531.38" x2="8.00" y2="531.38" stroke="#2e2e2e" stroke-width="0.6" />
<text x="1.60" y="549.16" font-size="7" fill="#d0d0d0" text-anchor="middle" >42</text>
<line x1="0.00" y1="541.30" x2="8.00" y2="541.30" stroke="#2e2e2e" stroke-width="0.6" />
<text x="1.60" y="559.07" font-size="7" fill="#d0d0d0" text-anchor="middle" >43</text>
<line x1="0.00" y1="551.21" x2="8.00" y2="551.21" stroke="#2e2e2e" stroke-width="0.6" />
<text x="1.60" y="568.99" font-size="7" fill="#d0d0d0" text-anchor="middle" >44</text>
<line x1="0.00" y1="561.13" x2="8.00" y2="561.13" stroke="#2e2e2e" stroke-width="0.6" />
<text x="1.60" y="578.90" font-size="7" fill="#d0d0d0" text-anchor="middle" >45</text>
<line x1="0.00" y1="571.04" x2="8.00" y2="571.04" stroke="#2e2e2e" stroke-width="0.6" />
<text x="1.60" y="588.82" font-size="7" fill="#d0d0d0" text-anchor="middle" >46</text>
<line x1="0.00" y1="580.96" x2="8.00" y2="580.96" stroke="#2e2e2e" stroke-width="0.6" />
<text x="1.60" y="598.73" font-size="7" fill="#d0d0d0" text-anchor="middle" >47</text>
<line x1="0.00" y1="590.88" x2="8.00" y2="590.88" stroke="#2e2e2e" stroke-width="0.6" />
<text x="1.60" y="608.65" font-size="7" fill="#d0d0d0" text-anchor="middle" >48</text>
<line x1="0.00" y1="600.79" x2="8.00" y2="600.79" stroke="#2e2e2e" stroke-width="0.6" />
<text x="1.60" y="618.56" font-size="7" fill="#d0d0d0" text-anchor="middle" >49</text>
<line x1="0.00" y1="610.70" x2="8.00" y2="610.70" stroke="#2e2e2e" stroke-width="0.6" />
<text x="1.60" y="628.48" font-size="7" fill="#d0d0d0" text-anchor="middle" >50</text>
<line x1="0.00" y1="620.62" x2="8.00" y2="620.62" stroke="#2e2e2e" stroke-width="0.6" />
<text x="1.60" y="638.39" font-size="7" fill="#d0d0d0" text-anchor="middle" >51</text>
<line x1="0.00" y1="630.53" x2="8.00" y2="630.53" stroke="#2e2e2e" stroke-width="0.6" />
<text x="1.60" y="648.31" font-size="7" fill="#d0d0d0" text-anchor="middle" >52</text>
<line x1="0.00" y1="640.45" x2="8.00" y2="640.45" stroke="#2e2e2e" stroke-width="0.6" />
<text x="1.60" y="658.22" font-size="7" fill="#d0d0d0" text-anchor="middle" >53</text>
<line x1="0.00" y1="650.37" x2="8.00" y2="650.37" stroke="#2e2e2e" stroke-width="0.6" />
<text x="1.60" y="668.14" font-size="7" fill="#d0d0d0" text-anchor="middle" >54</text>
<line x1="0.00" y1="660.28" x2="8.00" y2="660.28" stroke="#2e2e2e" stroke-width="0.6" />
<text x="1.60" y="678.05" font-size="7" fill="#d0d0d0" text-anchor="middle" >55</text>
<line x1="0.00" y1="670.19" x2="8.00" y2="670.19" stroke="#2e2e2e" stroke-width="0.6" />
<rect x="0.00" y="85.00" width="1024.00" height="18.00" fill="#101014" />
<rect x="0.00" y="90.00" width="50.50" height="11.50" fill="#262626" stroke="#3b3b3b" stroke-width="0.7" rx="1.5" />
<text transform="translate(1.50,98.70) scale(0.95,1)" font-size="7" fill="#e0e0e0" text-anchor="start" >AC42</text>
<path d="M42.5 94.8 L44.8 97 L47.1 94.8" stroke="#cfcfcf" fill="none" stroke-width="0.8" />
<rect x="55.60" y="93.50" width="1.00" height="1.00" fill="#9a9a9a" />
<rect x="55.60" y="95.50" width="1.00" height="1.00" fill="#9a9a9a" />
<rect x="55.60" y="97.50" width="1.00" height="1.00" fill="#9a9a9a" />
<rect x="61.00" y="90.00" width="37.50" height="11.50" fill="#262626" stroke="#3b3b3b" stroke-width="0.7" rx="1.5" />
<path d="M65 92.8 L70 98.8 M70 92.8 L65 98.8" stroke="#6b6b6b" fill="none" stroke-width="0.8" />
<path d="M76.5 96 L78.8 98.6 L83.5 92.6" stroke="#6b6b6b" fill="none" stroke-width="0.8" />
<text x="88.00" y="99.20" font-size="8" fill="#d8d8d8" text-anchor="start" font-style="italic" font-family="Liberation Serif">fx</text>
<rect x="101.00" y="90.00" width="925.00" height="11.50" fill="#262626" stroke="#3b3b3b" stroke-width="0.7" rx="1.5" />
<rect x="0.00" y="0.00" width="1024.00" height="33.00" fill="#0b101a" />
<rect x="535.00" y="0.00" width="242.00" height="14.00" fill="#12161d" />
<path d="M551.5 7.5 m-2.2 0 a2.2 2.2 0 1 0 4.4 0 a2.2 2.2 0 1 0 -4.4 0 M549.6 9.2 L547.6 11.2" stroke="#c9c9c9" fill="none" stroke-width="0.8" />
<text transform="translate(560.00,9.60) scale(0.95,1)" font-size="6.8" fill="#c8c8c8" text-anchor="start" >Search (Alt+Q)</text>
<rect x="2.80" y="2.40" width="8.00" height="8.00" fill="#3c8a5c" rx="1" />
<rect x="2.80" y="4.20" width="4.60" height="4.40" fill="#235f3c" />
<path d="M3.8 4.9 L6.4 7.9 M6.4 4.9 L3.8 7.9" stroke="#e8f5ec" fill="none" stroke-width="0.7" />
<text x="19.00" y="9.60" font-size="7" fill="#e6e6e6" text-anchor="start" textLength="26" lengthAdjust="spacingAndGlyphs">AutoSave</text>
<rect x="48.50" y="1.80" width="21.30" height="9.80" fill="#0b101a" stroke="#a8a8a8" stroke-width="0.9" rx="4.9" />
<circle cx="53.0" cy="6.7" r="3.4" fill="#f4f4f4"/>
<text transform="translate(58.20,9.30) scale(0.95,1)" font-size="6.3" fill="#e6e6e6" text-anchor="start" >Off</text>
<rect x="76.40" y="2.60" width="8.20" height="8.20" fill="none" stroke="#cfcfcf" stroke-width="0.8" rx="0.8" />
<rect x="78.30" y="2.60" width="4.50" height="2.60" fill="none" stroke="#cfcfcf" stroke-width="0.6" />
<rect x="78.30" y="7.40" width="4.50" height="3.40" fill="none" stroke="#cfcfcf" stroke-width="0.6" />
<text x="95.00" y="9.60" font-size="7" fill="#e6e6e6" text-anchor="start" textLength="119.2" lengthAdjust="spacingAndGlyphs">FINAL_Results_WM_JoCP_ALL_ANALYSIS.xlsx</text>
<path d="M217 5.8 L219.3 8.1 L221.6 5.8" stroke="#d0d0d0" fill="none" stroke-width="0.8" />
<text x="5.50" y="30.00" font-size="7.4" fill="#e8e8e8" text-anchor="start" textLength="10.25" lengthAdjust="spacingAndGlyphs">File</text>
<text x="28.75" y="30.00" font-size="7.4" fill="#e8e8e8" text-anchor="start" textLength="19.25" lengthAdjust="spacingAndGlyphs">Home</text>
<text x="57.50" y="30.00" font-size="7.4" fill="#e8e8e8" text-anchor="start" textLength="16.75" lengthAdjust="spacingAndGlyphs">Insert</text>
<text x="85.00" y="30.00" font-size="7.4" fill="#e8e8e8" text-anchor="start" textLength="36.75" lengthAdjust="spacingAndGlyphs">Page Layout</text>
<text x="131.75" y="30.00" font-size="7.4" fill="#e8e8e8" text-anchor="start" textLength="27.75" lengthAdjust="spacingAndGlyphs">Formulas</text>
<text x="169.50" y="30.00" font-size="7.4" fill="#e8e8e8" text-anchor="start" textLength="13.75" lengthAdjust="spacingAndGlyphs">Data</text>
<text x="192.50" y="30.00" font-size="7.4" fill="#e8e8e8" text-anchor="start" textLength="21.25" lengthAdjust="spacingAndGlyphs">Review</text>
<text x="223.25" y="30.00" font-size="7.4" fill="#e8e8e8" text-anchor="start" textLength="14.75" lengthAdjust="spacingAndGlyphs">View</text>
<text x="247.50" y="30.00" font-size="7.4" fill="#e8e8e8" text-anchor="start" textLength="14.75" lengthAdjust="spacingAndGlyphs">Help</text>
<text x="271.75" y="30.00" font-size="7.4" fill="#e8e8e8" text-anchor="start" textLength="40.50" lengthAdjust="spacingAndGlyphs">Ablebits Data</text>
<text x="323.00" y="30.00" font-size="7.4" fill="#e8e8e8" text-anchor="start" textLength="42.25" lengthAdjust="spacingAndGlyphs">Ablebits Tools</text>
<rect x="28.75" y="31.80" width="19.30" height="1.40" fill="#e0e0e0" />
<rect x="0.00" y="33.00" width="1024.00" height="52.00" fill="#272827" />
<rect x="0.00" y="32.20" width="1024.00" height="1.00" fill="#05070b" />
<line x1="29.50" y1="37.00" x2="29.50" y2="84.00" stroke="#3a3a3a" stroke-width="0.7" />
<line x1="114.00" y1="37.00" x2="114.00" y2="84.00" stroke="#3a3a3a" stroke-width="0.7" />
<line x1="235.50" y1="37.00" x2="235.50" y2="84.00" stroke="#3a3a3a" stroke-width="0.7" />
<line x1="403.00" y1="37.00" x2="403.00" y2="84.00" stroke="#3a3a3a" stroke-width="0.7" />
<line x1="485.60" y1="37.00" x2="485.60" y2="84.00" stroke="#3a3a3a" stroke-width="0.7" />
<line x1="845.00" y1="37.00" x2="845.00" y2="84.00" stroke="#3a3a3a" stroke-width="0.7" />
<line x1="919.00" y1="37.00" x2="919.00" y2="84.00" stroke="#3a3a3a" stroke-width="0.7" />
<text x="8.00" y="83.30" font-size="6.2" fill="#d6d6d6" text-anchor="start" textLength="13.00" lengthAdjust="spacingAndGlyphs">Undo</text>
<text x="57.00" y="83.30" font-size="6.2" fill="#d6d6d6" text-anchor="start" textLength="23.00" lengthAdjust="spacingAndGlyphs">Clipboard</text>
<text x="166.00" y="83.30" font-size="6.2" fill="#d6d6d6" text-anchor="start" textLength="11.00" lengthAdjust="spacingAndGlyphs">Font</text>
<text x="303.00" y="83.30" font-size="6.2" fill="#d6d6d6" text-anchor="start" textLength="24.50" lengthAdjust="spacingAndGlyphs">Alignment</text>
<text x="430.00" y="83.30" font-size="6.2" fill="#d6d6d6" text-anchor="start" textLength="19.00" lengthAdjust="spacingAndGlyphs">Number</text>
<text x="658.50" y="83.30" font-size="6.2" fill="#d6d6d6" text-anchor="start" textLength="13.50" lengthAdjust="spacingAndGlyphs">Styles</text>
<text x="876.00" y="83.30" font-size="6.2" fill="#d6d6d6" text-anchor="start" textLength="12.00" lengthAdjust="spacingAndGlyphs">Cells</text>
<text x="964.00" y="83.30" font-size="6.2" fill="#d6d6d6" text-anchor="start" textLength="17.00" lengthAdjust="spacingAndGlyphs">Editing</text>
<rect x="109.00" y="79.00" width="4.30" height="4.30" fill="none" stroke="#bdbdbd" stroke-width="0.6" />
<path d="M110.40 80.50 L112.80 82.90 M112.80 81 L112.80 82.9 L111.00 82.9" stroke="#bdbdbd" fill="none" stroke-width="0.6" />
<rect x="229.00" y="79.00" width="4.30" height="4.30" fill="none" stroke="#bdbdbd" stroke-width="0.6" />
<path d="M230.40 80.50 L232.80 82.90 M232.80 81 L232.80 82.9 L231.00 82.9" stroke="#bdbdbd" fill="none" stroke-width="0.6" />
<rect x="396.00" y="79.00" width="4.30" height="4.30" fill="none" stroke="#bdbdbd" stroke-width="0.6" />
<path d="M397.40 80.50 L399.80 82.90 M399.80 81 L399.80 82.9 L398.00 82.9" stroke="#bdbdbd" fill="none" stroke-width="0.6" />
<rect x="480.00" y="79.00" width="4.30" height="4.30" fill="none" stroke="#bdbdbd" stroke-width="0.6" />
<path d="M481.40 80.50 L483.80 82.90 M483.80 81 L483.80 82.9 L482.00 82.9" stroke="#bdbdbd" fill="none" stroke-width="0.6" />
<path d="M9.2 38.6 L7.2 40.6 L9.6 42.4 M7.4 40.6 L11.8 40.6 Q14.9 40.6 14.9 43.2 Q14.9 45 12.2 46.6 L10.6 47.4" stroke="#d9d9d9" fill="none" stroke-width="0.9" />
<path d="M19.20 42.02 L20.50 43.19 L21.80 42.02" stroke="#cfcfcf" fill="none" stroke-width="0.7" />
<path d="M12.6 51.8 L14.6 53.8 L12.2 55.6 M14.4 53.8 L10 53.8 Q6.9 53.8 6.9 56.4 Q6.9 58.2 9.6 59.8 L11.2 60.6" stroke="#8a8a8a" fill="none" stroke-width="0.9" />
<line x1="19.50" y1="56.50" x2="21.00" y2="56.50" stroke="#555" stroke-width="0.7" />
<path d="M39.3 41.3 L39.3 53 L44.5 53 M43.5 41.3 L50 41.3 L50 43.5" stroke="#e0a060" fill="none" stroke-width="1.1" />
<rect x="41.80" y="39.60" width="5.50" height="2.60" fill="#1f1f1f" stroke="#d9d9d9" stroke-width="0.7" rx="0.6" />
<rect x="45.80" y="45.00" width="7.00" height="9.40" fill="#2a2a2a" stroke="#b9b9b9" stroke-width="0.8" rx="0.6" />
<text x="36.80" y="62.50" font-size="6.8" fill="#e3e3e3" text-anchor="start" textLength="14.70" lengthAdjust="spacingAndGlyphs">Paste</text>
<path d="M42.80 67.66 L44.00 68.74 L45.20 67.66" stroke="#cfcfcf" fill="none" stroke-width="0.7" />
<path d="M60.6 39.5 L63 44.5 M63.8 39.5 L61.4 44.5" stroke="#d9d9d9" fill="none" stroke-width="0.7" />
<circle cx="60.4" cy="46" r="1.6" fill="#3b78c4"/><circle cx="63.8" cy="46" r="1.6" fill="#3b78c4"/>
<text x="68.00" y="45.80" font-size="6.8" fill="#e3e3e3" text-anchor="start" textLength="9.50" lengthAdjust="spacingAndGlyphs">Cut</text>
<rect x="58.20" y="52.40" width="4.40" height="7.00" fill="none" stroke="#d0d0d0" stroke-width="0.7" />
<path d="M62.6 53.8 L65 53.8 L66.4 55.4 L66.4 59.6 L61 59.6" stroke="#d0d0d0" fill="none" stroke-width="0.7" />
<text x="68.00" y="59.20" font-size="6.8" fill="#e3e3e3" text-anchor="start" textLength="14.00" lengthAdjust="spacingAndGlyphs">Copy</text>
<path d="M89.60 56.66 L90.80 57.74 L92.00 56.66" stroke="#cfcfcf" fill="none" stroke-width="0.7" />
<path d="M59 71.5 L62.2 68 L65.5 64.6" stroke="#e7c24a" fill="none" stroke-width="1.6" />
<path d="M59.5 72.3 L58.8 69.6 L61.8 67.3 L64 69.5 L61.5 72.6Z" stroke="#bfa767" fill="#e8d9a8" stroke-width="0.4" />
<text x="68.00" y="72.80" font-size="6.8" fill="#e3e3e3" text-anchor="start" textLength="39.50" lengthAdjust="spacingAndGlyphs">Format Painter</text>
<rect x="120.00" y="41.90" width="62.00" height="10.60" fill="#1b1b1b" stroke="#3c3c3c" stroke-width="0.7" rx="1" />
<text x="121.20" y="49.60" font-size="6.6" fill="#e3e3e3" text-anchor="start" textLength="16.80" lengthAdjust="spacingAndGlyphs">Calibri</text>
<path d="M177.80 46.86 L179.00 47.94 L180.20 46.86" stroke="#cfcfcf" fill="none" stroke-width="0.7" />
<rect x="182.00" y="41.90" width="22.50" height="10.60" fill="#1b1b1b" stroke="#3c3c3c" stroke-width="0.7" rx="1" />
<text x="184.80" y="49.60" font-size="6.6" fill="#e3e3e3" text-anchor="start" textLength="6.20" lengthAdjust="spacingAndGlyphs">11</text>
<path d="M201.00 46.86 L202.20 47.94 L203.40 46.86" stroke="#cfcfcf" fill="none" stroke-width="0.7" />
<text transform="translate(209.00,50.50) scale(0.95,1)" font-size="9" fill="#dcdcdc" text-anchor="start" >A</text>
<path d="M214.7 43.3 L215.7 42.3 L216.7 43.3" stroke="#cfcfcf" fill="none" stroke-width="0.6" />
<text transform="translate(223.00,50.20) scale(0.95,1)" font-size="7.6" fill="#dcdcdc" text-anchor="start" >A</text>
<path d="M227.3 42.6 L228.1 43.4 L228.9 42.6" stroke="#cfcfcf" fill="none" stroke-width="0.6" />
<text x="124.00" y="66.30" font-size="7.4" fill="#e6e6e6" text-anchor="start" font-weight="bold" >B</text>
<text x="136.80" y="66.30" font-size="7.6" fill="#e6e6e6" text-anchor="start" font-style="italic" font-family="Liberation Serif">I</text>
<text transform="translate(150.60,65.60) scale(0.95,1)" font-size="7.2" fill="#e6e6e6" text-anchor="start" >U</text>
<line x1="150.80" y1="67.20" x2="155.60" y2="67.20" stroke="#bdbdbd" stroke-width="0.6" />
<path d="M161.80 62.96 L163.00 64.04 L164.20 62.96" stroke="#cfcfcf" fill="none" stroke-width="0.7" />
<rect x="171.00" y="59.10" width="7.80" height="7.80" fill="none" stroke="#b5b5b5" stroke-width="0.7" />
<line x1="175.00" y1="59.10" x2="175.00" y2="66.90" stroke="#555" stroke-width="0.4" />
<line x1="171.00" y1="63.00" x2="178.80" y2="63.00" stroke="#555" stroke-width="0.4" />
<path d="M184.20 62.96 L185.40 64.04 L186.60 62.96" stroke="#cfcfcf" fill="none" stroke-width="0.7" />
<path d="M194.7 63.3 L197.8 60.2 L200.8 63.3 L197.8 66.3 Z M196.5 59 L198.2 60.7" stroke="#d9d9d9" fill="none" stroke-width="0.7" />
<rect x="193.20" y="66.30" width="9.30" height="2.00" fill="#e8e070" />
<path d="M206.00 62.96 L207.20 64.04 L208.40 62.96" stroke="#cfcfcf" fill="none" stroke-width="0.7" />
<text x="214.50" y="65.60" font-size="7.8" fill="#e0e0e0" text-anchor="start" >A</text>
<rect x="213.50" y="66.30" width="9.30" height="2.00" fill="#e03c3c" />
<path d="M227.00 62.96 L228.20 64.04 L229.40 62.96" stroke="#cfcfcf" fill="none" stroke-width="0.7" />
<line x1="242.50" y1="42.20" x2="250.50" y2="42.20" stroke="#bdbdbd" stroke-width="0.7" />
<line x1="243.50" y1="44.30" x2="249.50" y2="44.30" stroke="#9a9a9a" stroke-width="0.7" />
<line x1="243.50" y1="45.90" x2="249.50" y2="45.90" stroke="#9a9a9a" stroke-width="0.7" />
<line x1="243.50" y1="47.50" x2="249.50" y2="47.50" stroke="#9a9a9a" stroke-width="0.7" />
<rect x="253.20" y="40.50" width="12.90" height="12.60" fill="none" stroke="#6a6a6a" stroke-width="0.7" rx="1.2" />
<line x1="255.60" y1="44.50" x2="263.60" y2="44.50" stroke="#e0e0e0" stroke-width="0.7" />
<line x1="255.60" y1="46.10" x2="263.60" y2="46.10" stroke="#e0e0e0" stroke-width="0.7" />
<line x1="255.60" y1="47.70" x2="263.60" y2="47.70" stroke="#e0e0e0" stroke-width="0.7" />
<line x1="268.80" y1="46.40" x2="276.80" y2="46.40" stroke="#cfcfcf" stroke-width="0.7" />
<line x1="268.80" y1="48.00" x2="276.80" y2="48.00" stroke="#cfcfcf" stroke-width="0.7" />
<line x1="268.80" y1="49.60" x2="276.80" y2="49.60" stroke="#cfcfcf" stroke-width="0.7" />
<path d="M284.5 48 L290 42.5 M285 44 L287.5 41.5 L289 43" stroke="#c9c9c9" fill="none" stroke-width="0.8" />
<path d="M289.5 47 L292.5 44" stroke="#3b78c4" fill="none" stroke-width="0.9" />
<path d="M295.40 45.96 L296.60 47.04 L297.80 45.96" stroke="#cfcfcf" fill="none" stroke-width="0.7" />
<rect x="308.00" y="44.00" width="2.40" height="3.00" fill="#9a9a9a" />
<path d="M310.5 43 L313.5 45.5 L310.5 48Z" stroke="none" fill="#9a9a9a" stroke-width="1" />
<path d="M319.40 45.96 L320.60 47.04 L321.80 45.96" stroke="#cfcfcf" fill="none" stroke-width="0.7" />
<line x1="242.50" y1="59.50" x2="250.50" y2="59.50" stroke="#6e6e6e" stroke-width="0.8" />
<line x1="242.50" y1="60.90" x2="247.50" y2="60.90" stroke="#6e6e6e" stroke-width="0.8" />
<line x1="242.50" y1="62.30" x2="250.50" y2="62.30" stroke="#6e6e6e" stroke-width="0.8" />
<line x1="242.50" y1="63.70" x2="247.50" y2="63.70" stroke="#6e6e6e" stroke-width="0.8" />
<line x1="242.50" y1="65.10" x2="250.50" y2="65.10" stroke="#6e6e6e" stroke-width="0.8" />
<rect x="253.20" y="57.20" width="12.90" height="12.60" fill="none" stroke="#6a6a6a" stroke-width="0.7" rx="1.2" />
<line x1="255.60" y1="59.50" x2="263.60" y2="59.50" stroke="#9a9a9a" stroke-width="0.8" />
<line x1="257.10" y1="60.90" x2="262.10" y2="60.90" stroke="#9a9a9a" stroke-width="0.8" />
<line x1="255.60" y1="62.30" x2="263.60" y2="62.30" stroke="#9a9a9a" stroke-width="0.8" />
<line x1="257.10" y1="63.70" x2="262.10" y2="63.70" stroke="#9a9a9a" stroke-width="0.8" />
<line x1="255.60" y1="65.10" x2="263.60" y2="65.10" stroke="#9a9a9a" stroke-width="0.8" />
<line x1="269.00" y1="59.50" x2="277.00" y2="59.50" stroke="#6e6e6e" stroke-width="0.8" />
<line x1="272.00" y1="60.90" x2="277.00" y2="60.90" stroke="#6e6e6e" stroke-width="0.8" />
<line x1="269.00" y1="62.30" x2="277.00" y2="62.30" stroke="#6e6e6e" stroke-width="0.8" />
<line x1="272.00" y1="63.70" x2="277.00" y2="63.70" stroke="#6e6e6e" stroke-width="0.8" />
<line x1="269.00" y1="65.10" x2="277.00" y2="65.10" stroke="#6e6e6e" stroke-width="0.8" />
<rect x="284.00" y="59.20" width="7.80" height="7.00" fill="#4b4b4b" />
<rect x="285.60" y="61.50" width="2.20" height="2.20" fill="#3b78c4" />
<rect x="297.00" y="59.20" width="7.80" height="7.00" fill="#4b4b4b" />
<rect x="300.20" y="61.50" width="2.20" height="2.20" fill="#3b78c4" />
<rect x="333.20" y="42.00" width="4.50" height="3.20" fill="none" stroke="#9ab" stroke-width="0.6" />
<path d="M333.5 47.5 L337.5 47.5 Q339.2 47.5 339.2 49 Q339.2 50.5 337.5 50.5 L335 50.5" stroke="#5aa5a0" fill="none" stroke-width="0.8" />
<text x="343.00" y="49.30" font-size="6.8" fill="#e3e3e3" text-anchor="start" textLength="27.00" lengthAdjust="spacingAndGlyphs">Wrap Text</text>
<rect x="333.00" y="58.80" width="8.00" height="8.00" fill="#2a3a4a" stroke="#7fb3e0" stroke-width="0.8" />
<path d="M335 62.8 L339 62.8" stroke="#7fb3e0" fill="none" stroke-width="0.6" />
<text x="344.00" y="65.50" font-size="6.8" fill="#e3e3e3" text-anchor="start" textLength="42.00" lengthAdjust="spacingAndGlyphs">Merge &amp; Center</text>
<path d="M393.40 63.01 L394.50 63.99 L395.60 63.01" stroke="#cfcfcf" fill="none" stroke-width="0.7" />
<rect x="406.00" y="41.20" width="76.00" height="11.80" fill="#1b1b1b" stroke="#383838" stroke-width="0.7" rx="1" />
<text x="408.80" y="49.60" font-size="6.6" fill="#e3e3e3" text-anchor="start" textLength="21.70" lengthAdjust="spacingAndGlyphs">Number</text>
<path d="M477.30 46.76 L478.50 47.84 L479.70 46.76" stroke="#cfcfcf" fill="none" stroke-width="0.7" />
<text x="410.80" y="67.00" font-size="8.2" fill="#d6d6d6" text-anchor="start" >$</text>
<path d="M422.00 62.96 L423.20 64.04 L424.40 62.96" stroke="#cfcfcf" fill="none" stroke-width="0.7" />
<text transform="translate(429.60,66.80) scale(0.95,1)" font-size="8.2" fill="#d6d6d6" text-anchor="start" >%</text>
<text x="445.80" y="63.60" font-size="13" fill="#d6d6d6" text-anchor="start" font-weight="bold" >,</text>
<text x="460.50" y="67.20" font-size="5.6" fill="#bdbdbd" text-anchor="start" >.0</text>
<text x="460.50" y="67.20" font-size="5.6" fill="#bdbdbd" text-anchor="start" ></text>
<path d="M457.5 60.5 L461 60.5 M458.5 59.2 L457.2 60.5 L458.5 61.8" stroke="#3b78c4" fill="none" stroke-width="0.7" />
<text x="472.00" y="63.20" font-size="4.6" fill="#bdbdbd" text-anchor="start" >.0</text>
<text x="473.20" y="67.80" font-size="4.6" fill="#bdbdbd" text-anchor="start" >00</text>
<path d="M474 64.8 L477.3 64.8" stroke="#3b78c4" fill="none" stroke-width="0.7" />
<rect x="501.80" y="40.00" width="15.00" height="12.00" fill="#3a3a3a" stroke="#c9c9c9" stroke-width="0.6" />
<rect x="502.20" y="40.50" width="7.00" height="3.00" fill="#d8403a" />
<rect x="502.20" y="48.50" width="7.00" height="3.00" fill="#d8403a" />
<line x1="509.50" y1="40.00" x2="509.50" y2="52.00" stroke="#bdbdbd" stroke-width="0.5" />
<line x1="513.20" y1="40.00" x2="513.20" y2="52.00" stroke="#bdbdbd" stroke-width="0.5" />
<line x1="501.80" y1="44.00" x2="516.80" y2="44.00" stroke="#bdbdbd" stroke-width="0.5" />
<line x1="501.80" y1="48.00" x2="516.80" y2="48.00" stroke="#bdbdbd" stroke-width="0.5" />
<text x="494.00" y="62.60" font-size="6.6" fill="#e3e3e3" text-anchor="start" textLength="31.50" lengthAdjust="spacingAndGlyphs">Conditional</text>
<text x="491.50" y="70.40" font-size="6.6" fill="#e3e3e3" text-anchor="start" textLength="30.00" lengthAdjust="spacingAndGlyphs">Formatting</text>
<path d="M523.80 68.15 L524.80 69.05 L525.80 68.15" stroke="#cfcfcf" fill="none" stroke-width="0.7" />
<rect x="537.00" y="40.00" width="15.00" height="12.00" fill="#2a2a2a" stroke="#c9c9c9" stroke-width="0.6" />
<line x1="541.50" y1="40.00" x2="541.50" y2="52.00" stroke="#bdbdbd" stroke-width="0.5" />
<line x1="546.00" y1="40.00" x2="546.00" y2="52.00" stroke="#bdbdbd" stroke-width="0.5" />
<line x1="537.00" y1="44.00" x2="552.00" y2="44.00" stroke="#bdbdbd" stroke-width="0.5" />
<line x1="537.00" y1="48.00" x2="552.00" y2="48.00" stroke="#bdbdbd" stroke-width="0.5" />
<rect x="542.00" y="44.30" width="9.60" height="7.60" fill="#3b78c4" />
<path d="M545 52 L552 45" stroke="#9fc8f0" fill="none" stroke-width="0.9" />
<text x="531.00" y="62.60" font-size="6.6" fill="#e3e3e3" text-anchor="start" textLength="25.50" lengthAdjust="spacingAndGlyphs">Format as</text>
<text x="534.50" y="70.40" font-size="6.6" fill="#e3e3e3" text-anchor="start" textLength="10.50" lengthAdjust="spacingAndGlyphs">Table</text>
<path d="M549.60 68.15 L550.60 69.05 L551.60 68.15" stroke="#cfcfcf" fill="none" stroke-width="0.7" />
<rect x="560.20" y="40.50" width="278.00" height="31.00" fill="#2b2b2b" stroke="#3d3d3d" stroke-width="0.7" rx="1.5" />
<rect x="562.00" y="43.00" width="51.70" height="11.50" fill="#ffffff" stroke="#4a4a4a" stroke-width="0.5" />
<text transform="translate(564.20,51.30) scale(0.93,1)" font-size="7.2" fill="#1a1a1a" text-anchor="start" font-family="Liberation Serif">Normal 2</text>
<rect x="616.00" y="43.00" width="51.70" height="11.50" fill="#ffffff" stroke="#4a4a4a" stroke-width="0.5" />
<text transform="translate(618.20,51.30) scale(0.93,1)" font-size="6.8" fill="#1a1a1a" text-anchor="start" >Normal</text>
<rect x="670.00" y="43.00" width="51.70" height="11.50" fill="#ffc7ce" stroke="#4a4a4a" stroke-width="0.5" />
<text transform="translate(672.20,51.30) scale(0.93,1)" font-size="6.8" fill="#9c0006" text-anchor="start" >Bad</text>
<rect x="724.00" y="43.00" width="51.70" height="11.50" fill="#c6efce" stroke="#4a4a4a" stroke-width="0.5" />
<text transform="translate(726.20,51.30) scale(0.93,1)" font-size="6.8" fill="#006100" text-anchor="start" >Good</text>
<rect x="778.50" y="43.00" width="51.70" height="11.50" fill="#ffeb9c" stroke="#4a4a4a" stroke-width="0.5" />
<text transform="translate(780.70,51.30) scale(0.93,1)" font-size="6.8" fill="#9c5700" text-anchor="start" >Neutral</text>
<rect x="562.00" y="57.50" width="51.70" height="11.50" fill="#f2f2f2" stroke="#4a4a4a" stroke-width="0.5" />
<text transform="translate(564.20,65.80) scale(0.93,1)" font-size="6.8" fill="#fa7d00" text-anchor="start" font-weight="bold" >Calculation</text>
<rect x="616.00" y="57.50" width="51.70" height="11.50" fill="#a5a5a5" stroke="#4a4a4a" stroke-width="0.5" />
<text transform="translate(618.20,65.80) scale(0.93,1)" font-size="6.8" fill="#f2f2f2" text-anchor="start" font-weight="bold" >Check Cell</text>
<rect x="670.00" y="57.50" width="51.70" height="11.50" fill="#ffffff" stroke="#4a4a4a" stroke-width="0.5" />
<text transform="translate(672.20,65.80) scale(0.93,1)" font-size="6.8" fill="#7f7f7f" text-anchor="start" font-style="italic" >Explanatory ...</text>
<rect x="724.00" y="57.50" width="51.70" height="11.50" fill="#ffffff" stroke="#4a4a4a" stroke-width="0.5" />
<text transform="translate(726.20,65.80) scale(0.93,1)" font-size="6.8" fill="#954f72" text-anchor="start" text-decoration="underline" >Followed Hy...</text>
<rect x="778.50" y="57.50" width="51.70" height="11.50" fill="#ffffff" stroke="#4a4a4a" stroke-width="0.5" />
<text transform="translate(780.70,65.80) scale(0.93,1)" font-size="6.8" fill="#0563c1" text-anchor="start" text-decoration="underline" >Hyperlink</text>
<rect x="832.00" y="41.00" width="8.50" height="10.50" fill="#262626" stroke="#3d3d3d" stroke-width="0.5" />
<line x1="834.50" y1="46.00" x2="837.50" y2="46.00" stroke="#6a6a6a" stroke-width="0.6" />
<rect x="832.00" y="51.50" width="8.50" height="10.00" fill="#262626" stroke="#3d3d3d" stroke-width="0.5" />
<path d="M835.00 55.76 L836.20 56.84 L837.40 55.76" stroke="#cfcfcf" fill="none" stroke-width="0.7" />
<rect x="832.00" y="61.50" width="8.50" height="10.00" fill="#262626" stroke="#3d3d3d" stroke-width="0.5" />
<line x1="834.50" y1="64.20" x2="838.00" y2="64.20" stroke="#cfcfcf" stroke-width="0.5" />
<path d="M835.00 65.76 L836.20 66.84 L837.40 65.76" stroke="#cfcfcf" fill="none" stroke-width="0.7" />
<rect x="852.50" y="40.50" width="15.00" height="11.50" fill="#2a2a2a" stroke="#c9c9c9" stroke-width="0.7" />
<line x1="857.50" y1="40.50" x2="857.50" y2="52.00" stroke="#bdbdbd" stroke-width="0.5" />
<line x1="862.50" y1="40.50" x2="862.50" y2="52.00" stroke="#bdbdbd" stroke-width="0.5" />
<line x1="852.50" y1="44.30" x2="867.50" y2="44.30" stroke="#bdbdbd" stroke-width="0.5" />
<line x1="852.50" y1="48.20" x2="867.50" y2="48.20" stroke="#bdbdbd" stroke-width="0.5" />
<rect x="852.20" y="44.50" width="15.60" height="3.60" fill="#3b78c4" />
<text x="852.00" y="62.60" font-size="6.6" fill="#e3e3e3" text-anchor="start" textLength="15.00" lengthAdjust="spacingAndGlyphs">Insert</text>
<path d="M858.60 68.05 L859.60 68.95 L860.60 68.05" stroke="#cfcfcf" fill="none" stroke-width="0.7" />
<rect x="874.50" y="40.50" width="15.00" height="11.50" fill="#2a2a2a" stroke="#c9c9c9" stroke-width="0.7" />
<line x1="879.50" y1="40.50" x2="879.50" y2="52.00" stroke="#bdbdbd" stroke-width="0.5" />
<line x1="884.50" y1="40.50" x2="884.50" y2="52.00" stroke="#bdbdbd" stroke-width="0.5" />
<line x1="874.50" y1="44.30" x2="889.50" y2="44.30" stroke="#bdbdbd" stroke-width="0.5" />
<line x1="874.50" y1="48.20" x2="889.50" y2="48.20" stroke="#bdbdbd" stroke-width="0.5" />
<rect x="874.20" y="44.50" width="15.60" height="3.60" fill="#3b78c4" />
<path d="M885.50 44.10 L889.00 48.50 M889.00 44.10 L885.50 48.50" stroke="#e04040" fill="none" stroke-width="0.9" />
<text x="873.30" y="62.60" font-size="6.6" fill="#e3e3e3" text-anchor="start" textLength="17.90" lengthAdjust="spacingAndGlyphs">Delete</text>
<path d="M880.80 68.05 L881.80 68.95 L882.80 68.05" stroke="#cfcfcf" fill="none" stroke-width="0.7" />
<rect x="896.80" y="40.50" width="15.00" height="11.50" fill="#2a2a2a" stroke="#c9c9c9" stroke-width="0.7" />
<line x1="901.80" y1="40.50" x2="901.80" y2="52.00" stroke="#bdbdbd" stroke-width="0.5" />
<line x1="906.80" y1="40.50" x2="906.80" y2="52.00" stroke="#bdbdbd" stroke-width="0.5" />
<line x1="896.80" y1="44.30" x2="911.80" y2="44.30" stroke="#bdbdbd" stroke-width="0.5" />
<line x1="896.80" y1="48.20" x2="911.80" y2="48.20" stroke="#bdbdbd" stroke-width="0.5" />
<rect x="896.50" y="44.50" width="15.60" height="3.60" fill="#3b78c4" />
<line x1="898.00" y1="38.90" x2="910.00" y2="38.90" stroke="#bdbdbd" stroke-width="0.6" />
<text x="895.20" y="62.40" font-size="6.6" fill="#e3e3e3" text-anchor="start" textLength="19.10" lengthAdjust="spacingAndGlyphs">Format</text>
<path d="M903.30 68.05 L904.30 68.95 L905.30 68.05" stroke="#cfcfcf" fill="none" stroke-width="0.7" />
<text x="925.60" y="47.60" font-size="9" fill="#e6e6e6" text-anchor="start" >Σ</text>
<text x="936.00" y="46.00" font-size="6.8" fill="#e3e3e3" text-anchor="start" textLength="24.50" lengthAdjust="spacingAndGlyphs">AutoSum</text>
<path d="M968.00 42.96 L969.20 44.04 L970.40 42.96" stroke="#cfcfcf" fill="none" stroke-width="0.7" />
<rect x="926.00" y="52.00" width="8.00" height="8.00" fill="none" stroke="#c9c9c9" stroke-width="0.8" />
<path d="M930 54 L930 57.5 M928.6 56.3 L930 57.8 L931.4 56.3" stroke="#4a9ae0" fill="none" stroke-width="0.7" />
<text x="936.00" y="59.20" font-size="6.8" fill="#e3e3e3" text-anchor="start" textLength="8.00" lengthAdjust="spacingAndGlyphs">Fill</text>
<path d="M945.80 56.35 L946.80 57.25 L947.80 56.35" stroke="#cfcfcf" fill="none" stroke-width="0.7" />
<path d="M926.5 70 L930 66 L933.6 69 L930.3 73 Z" stroke="#e0b0c0" fill="#d88aa8" stroke-width="0.5" />
<text x="936.00" y="72.60" font-size="6.8" fill="#e3e3e3" text-anchor="start" textLength="13.80" lengthAdjust="spacingAndGlyphs">Clear</text>
<path d="M952.00 69.95 L953.00 70.85 L954.00 69.95" stroke="#cfcfcf" fill="none" stroke-width="0.7" />
<text x="978.60" y="45.80" font-size="6" fill="#4a9ae0" text-anchor="start" >A</text>
<text x="978.60" y="52.60" font-size="6" fill="#d0d0d0" text-anchor="start" >Z</text>
<path d="M986.5 42.8 L993.2 42.8 L990.6 46.5 L990.6 50 L989.2 50 L989.2 46.5 Z" stroke="#d0d0d0" fill="none" stroke-width="0.7" />
<text x="977.00" y="62.60" font-size="6.6" fill="#e3e3e3" text-anchor="start" textLength="18.20" lengthAdjust="spacingAndGlyphs">Sort &amp;</text>
<text x="976.20" y="70.40" font-size="6.6" fill="#e3e3e3" text-anchor="start" textLength="14.30" lengthAdjust="spacingAndGlyphs">Filter</text>
<path d="M992.80 68.05 L993.80 68.95 L994.80 68.05" stroke="#cfcfcf" fill="none" stroke-width="0.7" />
<circle cx="1012.4" cy="44.2" r="5" fill="none" stroke="#d6d6d6" stroke-width="0.8"/>
<line x1="1008.80" y1="47.80" x2="1002.20" y2="54.40" stroke="#d6d6d6" stroke-width="0.9" />
<text x="1000.50" y="62.60" font-size="6.6" fill="#e3e3e3" text-anchor="start" textLength="18.00" lengthAdjust="spacingAndGlyphs">Find &amp;</text>
<text x="999.00" y="70.40" font-size="6.6" fill="#e3e3e3" text-anchor="start" textLength="15.00" lengthAdjust="spacingAndGlyphs">Select</text>
<path d="M1016.60 68.05 L1017.60 68.95 L1018.60 68.05" stroke="#cfcfcf" fill="none" stroke-width="0.7" />
<rect x="8.00" y="667.90" width="27.00" height="1.20" fill="#5a5a5a" />
<rect x="68.00" y="667.90" width="956.00" height="1.20" fill="#5a5a5a" />
</svg>
</body></html>
